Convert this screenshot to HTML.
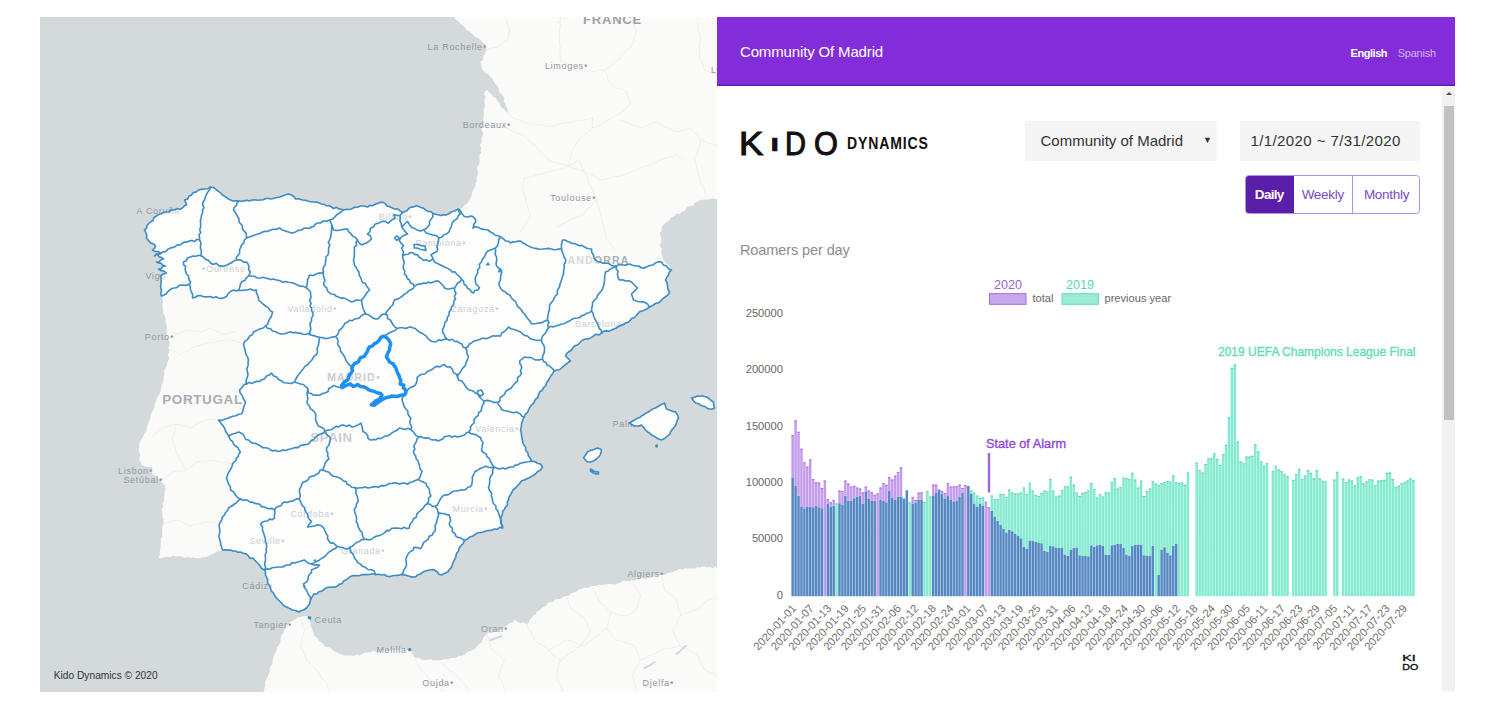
<!DOCTYPE html>
<html lang="en"><head><meta charset="utf-8"><title>Kido Dynamics - Community Of Madrid</title>
<style>
html,body{margin:0;padding:0;background:#fff}
body{width:1500px;height:717px;position:relative;overflow:hidden;font-family:"Liberation Sans",sans-serif;color:#333}
#map{position:absolute;left:39.5px;top:17px;width:677.5px;height:674.7px;overflow:hidden;background:#d4d9dc}
#map svg{display:block;font-family:"Liberation Sans",sans-serif}
#panel{position:absolute;left:717px;top:17px;width:738px;height:674px;background:#fff;overflow:hidden}
#hdr{position:absolute;left:0;top:0;width:738px;height:69px;background:#822dd9;color:#fff;box-shadow:inset 0 -1.5px 0 rgba(50,0,120,.4)}
#hdr .ttl{position:absolute;left:23px;top:25px;font-size:15px;line-height:20px;letter-spacing:-0.15px;white-space:nowrap}
#hdr .lang{position:absolute;right:19px;top:29px;font-size:11px;line-height:14px;white-space:nowrap;letter-spacing:-0.2px}
#hdr .lang b{font-weight:bold;margin-right:10.5px;letter-spacing:-0.45px}
#hdr .lang span{opacity:.62}
#logo{position:absolute;left:0;top:108px;width:300px;height:40px;color:#111}
#logo .k{position:absolute;left:0;top:0.5px;font-size:33px;line-height:36px;-webkit-text-stroke:1.1px #111}
#logo .k i{position:absolute;top:0;font-style:normal;display:block;transform-origin:0 50%}
#logo .d{position:absolute;left:129.5px;top:0;font-size:16.5px;font-weight:bold;line-height:36px;letter-spacing:1px;transform:scaleX(.85);transform-origin:0 50%;white-space:nowrap}
.box{position:absolute;top:104.2px;height:39.5px;background:#f5f5f5;font-size:15px;line-height:39.5px;color:#333;white-space:nowrap}
#sel{left:308px;width:192px}
#sel span.t{position:absolute;left:15.5px;top:-0.6px;letter-spacing:0px}
#sel span.a{position:absolute;left:178px;top:0;font-size:9px}
#date{left:523px;width:179.5px}
#date span.t{position:absolute;left:10.5px;top:-0.6px;letter-spacing:0.4px}
#btns{position:absolute;left:528px;top:158px;width:174.5px;height:39px;box-sizing:border-box;border:1px solid #b593e3;border-radius:3.5px;overflow:hidden;font-size:13.5px;line-height:37px;color:#7a4cc4;white-space:nowrap;letter-spacing:-0.3px}
#btns div{position:absolute;top:-1px;height:39px;text-align:center;line-height:39px}
#btns .on{left:-1px;width:48.5px;background:#5b1ea9;color:#fff;font-weight:bold;letter-spacing:-0.7px}
#btns .w{left:47.5px;width:59.5px;border-right:1px solid #b593e3;box-sizing:border-box}
#btns .m{left:107px;width:67px}
#rpd{position:absolute;left:23px;top:224px;font-size:14.5px;line-height:18px;color:#8d8d8d;white-space:nowrap;letter-spacing:-0.1px}
#chartsvg{position:absolute;left:0;top:0}
#sb{position:absolute;left:725px;top:69px;width:13px;height:605px;background:#f1f1f1}
#sb .th{position:absolute;left:1.5px;top:19.5px;width:10px;height:314px;background:#c1c1c1}
#sb .up{position:absolute;left:3.5px;top:5.5px;width:0;height:0;border-left:3px solid transparent;border-right:3px solid transparent;border-bottom:3.5px solid #505050}
</style></head><body>
<div id="map">
<svg id="mapsvg" width="678" height="675" viewBox="39.5 17 678 675">
<rect x="39" y="17" width="680" height="676" fill="#d4d9dc"/>
<path d="M454 17 L455.3 19.9 L458.2 21.5 L460 24 L462.4 25.6 L464.5 27.5 L466 30 L468.7 31.2 L470.7 33.3 L473 35 L475 37.1 L477.8 38.1 L480 40 L482 42.6 L485 44 L485.4 47 L486 50 L484.7 53.1 L483 56 L482.5 59.5 L480 62 L480.7 64.7 L481.3 67.3 L482 70 L485 73 L487.9 74.4 L490 77 L492 78.6 L492.8 81.1 L494.4 83.1 L496 85 L497.8 87 L498.1 89.7 L498.9 92.2 L501 94 L502.5 96.3 L504 98.6 L503.2 101.8 L505 104 L505.7 107.1 L506.8 110.1 L508 113 L505.4 111.1 L503 109 L501 107.4 L499.7 105.2 L499 102.7 L497 101 L495.5 98.2 L492.5 96.7 L491 94 L488.5 92.5 L487 90 L484.5 91 L483.5 94 L484.9 97 L484 100 L484 102.5 L484.3 105.1 L484.2 107.6 L483 110 L483.3 112.4 L483.2 114.9 L483.1 117.3 L482.5 119.6 L482 122 L482.7 124.8 L481.1 127.3 L481 130 L483 134 L481 138 L481.4 140.5 L481.1 142.8 L479.4 145.1 L480.7 147.6 L480 150 L480.6 152.6 L478.9 154.9 L479 157.5 L479.1 160.1 L479.1 162.6 L478 165 L476.5 167.4 L477.1 170.2 L477.5 172.9 L477 175.5 L476 178 L476.3 180.7 L475.1 183 L475.2 185.6 L474 188 L472.4 190.5 L471.3 193.1 L471 196 L469.5 198.7 L468.2 201.7 L466 204 L463.5 205.5 L462 208 L458 209 L454 211 L450.7 212 L448 214 L445.5 214.9 L442.8 214.9 L440.3 215.5 L437.7 214.7 L435.1 214.3 L432.5 213.6 L430.3 211.5 L427.1 211.4 L424.7 209.6 L422.8 208.1 L420.4 207.5 L418.1 206.6 L415.9 205.7 L412.5 206.9 L409 207.7 L407.2 210 L404.9 211.6 L402.2 212.6 L399.3 210.6 L397.1 208.9 L394.2 209 L391.8 208.1 L389.5 206.7 L386.7 206.1 L384.9 203.8 L382.7 202.3 L379.6 202.4 L376.8 203.5 L374 204.5 L371.8 205.7 L369.1 205.5 L367 207 L363.6 206 L360 206 L357.1 207.3 L353.8 207.4 L351 209 L348.4 209.5 L345.6 209.3 L343 210 L340.6 209.3 L338.2 208.9 L336 207.3 L333.1 208.6 L331 207 L328.7 205.6 L325.9 205.8 L323.6 204.3 L321 204 L318.6 202.9 L316.2 202.1 L313.6 202 L311 202 L308 201.3 L305.1 200.2 L302 200 L298.6 198.9 L295 199 L293.3 196.5 L290.8 194.9 L288 194 L284.9 194.8 L282 196 L279.3 197 L276.5 197.5 L273.7 198.2 L271 199 L268.2 198.5 L265.4 198.5 L262.7 199.7 L260 200 L257.3 200.3 L254.4 199.7 L251.7 200 L249 201 L246.2 200.3 L243.5 200.9 L240.8 201.3 L238 201 L235.3 200.9 L232.6 201 L230 200 L227.2 198.5 L224.6 196.7 L222 195 L220.2 193.1 L218.2 191.5 L216 190 L213.4 187.7 L210 187 L207.3 188.8 L204 189 L201 189.4 L198 190 L195.9 191.9 L192.8 192.6 L191 195 L188.4 196.3 L187 199.2 L184 200 L185.2 202.4 L186 205 L183.7 206 L182 208 L179.5 209.3 L176.5 208.5 L174 210 L171.1 209.8 L168.8 211.9 L166 212 L163.2 212.3 L160.9 213.7 L158.2 214.3 L156 216 L153.5 217.5 L152.5 220.5 L150 222 L148.1 223.7 L146.4 225.5 L146.1 228.4 L144 230 L145.3 232.5 L146.2 235.1 L146 238 L148 240.5 L150 243 L152.9 243.8 L155 246 L154 248.4 L152 250 L154.5 251.4 L157.5 251.5 L160 253 L156.6 253.7 L154 256 L157 254 L158.3 256.5 L160.9 257.4 L163 259 L160.6 259.7 L158.6 261.7 L156 262 L158.3 262.9 L160.7 263.4 L162.6 265.4 L165 266 L162.3 266.2 L160.7 268.9 L158 269 L160.5 270.6 L163.7 271 L166 273 L162.7 274 L160 276 L160.8 278.5 L160.6 281 L160.6 283.5 L160 286 L160.5 288.5 L161 291 L160.2 293.6 L161 296 L162.2 298.9 L162.4 301.9 L162 305 L162.2 308 L162.6 311 L163 314 L164.5 316.4 L165.1 319.2 L165 322 L166.1 324.6 L166.2 327.3 L166 330 L166.1 332.6 L166.2 335.2 L166.9 337.6 L168 340 L169.3 342.4 L169 344.9 L168 347.6 L169 350 L168.6 352.4 L167.2 354.6 L168.2 357.3 L168.3 359.8 L167 362 L166.6 364.4 L165.8 366.8 L164.2 369 L163.6 371.4 L164 374 L163.2 376.7 L163 379.6 L162.5 382.4 L161 385 L160.6 387.8 L160.2 390.7 L159.3 393.4 L158 396 L156.2 398.5 L155.4 401.3 L154.2 404 L154 407 L153 409.8 L151.1 412.2 L150 414.9 L150 418 L148.8 420.4 L147.8 422.9 L147 425.5 L146 428 L145.9 431 L143.7 433.2 L143 436 L141.6 438.6 L139.7 441 L139 444 L138.8 447.1 L138 450 L138.9 452.6 L139.5 455.2 L139 458 L138.7 460.6 L141 462.5 L141 465 L144 466.1 L147 467 L149.6 466.9 L152 468 L151 472 L152.6 474.4 L155 476 L157.7 477.8 L160 480 L161.6 482.8 L164 485 L165 488.5 L164 492 L164.2 494.5 L163.3 496.8 L163.7 499.4 L163.4 501.8 L162 504 L162.9 506.5 L161.4 509 L161.3 511.5 L162 514 L161.9 516.5 L163.1 518.9 L162.7 521.5 L163 524 L161.9 526.4 L161.8 528.9 L161.4 531.4 L162 534 L161.6 536.5 L160.3 538.9 L160.5 541.5 L160 544 L160.1 546.7 L159.8 549.4 L159 552 L159.3 555.1 L158 558 L161.1 558.3 L164 557 L166.6 556.5 L169.5 557.3 L172 556 L174.7 556.6 L177.3 556.6 L180 556 L182.4 557 L184.8 557.8 L187.6 556.8 L190 558 L192.5 557.3 L195 558.2 L197.5 558.2 L200 558 L202.6 557.2 L205.4 556.9 L208 556 L211 554.4 L214 553 L216.7 551.2 L220 551 L222 550 L224.7 549.9 L227.3 550.1 L230 550 L232.4 551 L235 551 L237.4 552.2 L240 552 L242.7 553.3 L245.7 553.9 L248 556 L249.4 558.2 L252.4 558 L254 560 L256.5 562.5 L259 565 L260.8 568.2 L264 570 L265 572.2 L264.9 574.8 L266 577 L267.2 579.9 L267 583 L268.8 585.3 L270 588 L270.8 590.9 L273 593 L274.2 595.7 L276 598 L278.5 600.5 L281 603 L283.1 605.5 L286 607 L289 608.4 L292 610 L295.2 610.5 L298 612 L300.4 610.7 L303 610 L306 608 L307.5 606 L309 604 L310 600 L312 596 L313.5 593.9 L316.4 594 L318 592 L321.3 591.1 L324 589 L326.1 587.6 L328.5 587.2 L331 587 L334.1 587.2 L337 586 L338.9 584.2 L341.7 583.5 L343 581 L345.3 580.1 L347.2 578.6 L349 577 L351.9 575.7 L355 575.5 L358.6 575.8 L362 574.5 L365.5 574.6 L369 574.5 L372 573.8 L375 574.5 L378 574.3 L381 575 L383.7 574.5 L386 576 L389.6 576.6 L393 575.5 L395.7 575.5 L398.4 575.1 L401 574.5 L404.5 575.1 L408 576 L411.4 576.9 L415 577 L417.1 574.9 L420 574 L422.3 572.2 L425 571 L429 570 L433 569.5 L437 572 L438.4 574.3 L441 575 L445 573 L447.4 571.7 L449 569.5 L451.1 567.1 L452 564 L453.3 560.9 L455 558 L455.6 555.5 L456.3 553 L458 551 L458.5 548.3 L460 546 L462.6 543.7 L464 540.5 L466.8 539.1 L469 537 L472 536.3 L474.5 534.5 L477.5 532.8 L481 532.5 L484 531.5 L487 530.5 L490.6 530.4 L494 529 L496.7 529.3 L499.2 527.3 L502 528 L501 524 L500 520 L500.8 516.9 L502 514 L502.1 511.3 L504 509.3 L505 507 L507 505.1 L506.7 502.2 L508 500 L508.3 497.4 L509.8 495.2 L511 493 L512.4 490 L515 488 L517.2 485.5 L519.5 483 L521.2 480.7 L524 480 L527 478.5 L530 477 L532.5 475.6 L535 474 L537.1 471.5 L540 470 L542 467 L540 464 L537.3 463.5 L535 462 L531 461 L529.8 458.3 L528 456 L527.2 452.6 L525 450 L525.2 447.3 L523.5 445.3 L522.5 443 L521.8 439.5 L521 436 L520.9 432.9 L520 430 L520.8 427.1 L521 424 L521.9 421 L523 418 L525 414 L527.1 412.4 L528 410 L529.3 407.4 L531 405 L533 403.4 L534 401 L535.4 399 L537.4 397.5 L538 395 L539.2 391.8 L542 390 L543 387.6 L545 386 L546.1 382.8 L548 380 L549.2 377.9 L550.4 375.8 L552 374 L553.3 371.3 L556 370 L558.8 369.8 L561 368 L563.3 365.8 L566 364 L567.8 362.2 L570 361 L567 358 L565 356 L566.1 353.7 L568 352 L571 350 L573 347 L574.9 345.5 L577.3 344.7 L579 343 L580.7 341.2 L582.7 339.8 L585 339 L588 338.9 L590.6 337.6 L593 336 L595.4 334.2 L598.7 334.9 L601 333 L603.2 331.3 L605.8 330.9 L608.6 331.2 L611 330 L613.4 328.9 L615.8 328 L618 326.5 L620.3 325.2 L622.9 324.6 L625 323 L627.6 322.3 L629.5 320.7 L631 318.5 L633.6 317.8 L635.4 316 L637 314 L639.5 311.4 L643 310.5 L646.2 309 L649 307 L652.1 305.5 L655 303.5 L658.5 302.6 L661 300 L663.4 297.8 L666 296 L667.9 294.3 L669 292 L667.4 289.2 L667 286 L666.6 282.8 L665 280 L666.3 277.4 L668 275 L668.8 272.1 L671 270 L669 266 L666.2 263.8 L664 261 L662.1 259.1 L661.8 256.4 L661 254 L660.7 251.5 L661.5 248.9 L659.5 246.6 L660 244 L660.7 241.3 L660.9 238.7 L660 236 L659.3 233.2 L661.1 230.7 L661 228 L662.2 225.6 L664.1 223.8 L666 222 L668.7 221.1 L669.7 218.3 L672 217 L674.1 215.5 L676 213.5 L679.1 213.9 L681 212 L683.8 211.3 L685.4 208.9 L687.2 206.7 L690 206 L692.7 205.7 L694 202.9 L696.4 202 L698.4 200.4 L701 200 L704 199.6 L707 199.4 L710 199 L712.5 198.2 L715 199 L717.5 199.3 L720 199 L720 10 L454 10.0Z" fill="#fafaf9"/>
<path d="M262 695 L261.6 692.4 L263.6 690.4 L264 688 L264.7 685.7 L264.6 683.1 L265 680.7 L265.9 678.4 L267.5 676.4 L268 674 L269.5 671.8 L269.2 669.1 L269.8 666.6 L271.9 664.6 L272 662 L272.3 659.4 L273 657 L273.5 654.5 L275.4 652.5 L276 650 L276.3 647.2 L278.6 645.3 L279.7 642.8 L280 640 L280.4 637.3 L281.3 634.7 L282.9 632.5 L284 630 L285.1 627.3 L287 625 L290 622 L292.7 620.8 L295 619 L297.3 617.4 L300 617 L304 616 L308 616 L309.2 618.4 L309 621 L310.2 623.4 L310 626 L311.7 628.2 L312 631 L313.4 633.3 L314 636 L316.9 638.1 L319 641 L322.1 642.9 L324 646 L326.8 647.1 L329.8 647.7 L332 650 L334.6 651.4 L337.2 653 L340 654 L343.3 655.6 L347 655.5 L350 655.3 L353 656 L355.8 654.5 L359.2 655.7 L362 654 L364.8 652.6 L368 652.6 L371 652 L373.4 650.8 L376 651.9 L378.6 651.8 L381 651 L383.4 649.7 L385.9 649.6 L388.6 651.3 L391 650 L394 650.3 L397 650.4 L400 649.5 L403 649 L406 649.8 L409 649 L411 653 L413 656 L415.7 658 L419 658 L421.7 659.9 L425 660 L427.7 659.7 L430.4 659.3 L433 660.5 L435.7 660.3 L438.3 660.4 L441 660 L443.4 659.2 L446.1 659.4 L448.6 658.8 L451 658 L453.6 658.1 L456.1 657.5 L458.4 655.8 L461 656 L463.9 654.7 L466.3 652.6 L469 651 L472.2 650.1 L474.8 648.4 L477 646 L478.6 644 L481.1 642.6 L482 640 L482.7 637.5 L484.5 635.9 L486 634 L488.1 632.5 L490.8 633.3 L493 632 L495.4 631.5 L497.6 630.6 L500 630 L502.8 629 L504.6 626.6 L507 625 L509.1 623 L512.2 622.4 L514 620 L517 621.5 L520 623 L523.2 622.5 L526 624 L528.3 622.5 L529.1 619.8 L531 618 L532.3 615.7 L535 614.5 L536 612 L538.7 610.8 L540.6 608.6 L543 607 L545.7 605.9 L547.2 603.1 L550 602 L552.7 601.8 L554.5 599.6 L557 599 L560 599 L562.4 597.1 L565 596 L568 595.7 L570.2 593.4 L573 592.5 L575.9 591.8 L578.1 589.7 L581 589 L583.2 587.4 L586.1 587.9 L588.7 587.4 L591 586 L593.5 586.1 L596 585.7 L598.4 584.4 L601 585 L603.5 584.4 L606 584.4 L608.4 583.7 L611 584 L613.7 584.4 L616.1 583.7 L618.7 583.3 L621 582 L623.3 580.6 L626 580.9 L628.7 581.5 L631 580 L633.8 580.6 L636.3 579.4 L639 579 L641.5 577.7 L644.4 578.9 L647 578 L650.6 577.7 L654 576.5 L657.3 575 L661 575 L664 575.1 L666.4 573.6 L669 572.5 L671.8 572.2 L674.3 570.9 L677 570 L679.4 568.8 L682.1 569.7 L684.4 568.2 L687 568.5 L689.5 568.3 L692.1 568.5 L694.7 568.4 L697 567 L699.5 567.4 L702 566.6 L704.5 566.5 L707 567.5 L709.6 567 L712.2 568.2 L714.8 566.8 L717.4 568.4 L720 568 L720 700 L262 700.0Z" fill="#fafaf9"/>
<path d="M486 50 L491.4 48.1 L497 47 L500.3 44.6 L503.4 41.9 L507 40 L508.3 35.1 L509 30 L507.3 25.1 L506 20.0 M560 17 L559.4 21.6 L559.8 26.2 L558.9 30.8 L559 35.4 L559 40 L559 44 L559.8 48 L559.3 52 L559.7 56 L560 60 L563.7 62.6 L567.8 64.5 L572 66 L576.7 66.9 L580.8 69.5 L585.5 70.5 L590 72 L594.7 71.2 L599.3 70.1 L604 70.0 M604 70 L607.6 67.6 L611.3 65.5 L614.1 62 L618 60 L620.4 56.4 L623.4 53.4 L626.6 50.6 L629.6 47.6 L632 44 L633.7 39.4 L635 34.8 L636 30 L633.4 24.7 L630 20.0 M604 70 L606.4 74.5 L607.6 79.5 L610 84 L613.8 86.5 L617.7 88.5 L622.3 89.4 L626 92 L627.2 96 L628.9 99.9 L630 104 L626.6 107.3 L623.1 110.5 L620 114 L615.7 115.5 L612 117.9 L607.9 119.9 L604 122 L600.3 124.6 L596.2 126.4 L592 128.0 M504 110 L508.3 113.7 L512 118 L516.5 119.4 L521.1 120.8 L525.4 122.7 L530 124 L534 124 L538 125.2 L542 125 L545.9 126.1 L550 126 L554.5 125.7 L558.7 124.1 L563.1 123.2 L567.6 122.7 L572 122 L576 121.2 L580 120.3 L584.1 120 L588.1 119.2 L592 118 L591.8 123 L592 128.0 M592 128 L588.2 131.6 L584.1 134.7 L580 138 L576.9 141.7 L574.6 145.9 L572 150 L570.8 153.9 L570.4 158.1 L568.8 162 L568 166.0 M505 128 L508.8 129.4 L512.5 131 L516.1 132.9 L520 134 L523.5 136 L526.4 138.8 L529.2 141.7 L532.5 144.1 L536 146 L538.6 149.8 L541.8 153.2 L545.5 156.1 L548 160 L551.8 161.8 L556 162.5 L560 163.8 L564.1 164.4 L568 166 L571.9 167.7 L576 169 L580.2 169.9 L584 172 L588 174 L592.3 175.5 L596.2 177.7 L600 180 L604 179.1 L608 178.5 L611.9 177 L616 176.7 L620 176 L624.1 174.7 L628.2 173.3 L632 171.1 L636 169.7 L640 168 L643.9 166.2 L648.2 165.2 L652.2 163.6 L656.2 162 L660 160 L664.1 158.7 L668.2 157.5 L672.2 156.1 L676 154 L679.2 157.3 L683 160.0 M568 166 L564 167.2 L560.2 169 L556.1 169.9 L552 170.8 L548 172 L544.1 173.2 L540.1 174.5 L536 174.9 L532.1 176.6 L528.1 177.3 L524 178 L522.9 181.9 L522.7 186 L522 190 L523.6 194.6 L525.1 199.2 L526 204 L527.4 208 L528.7 212 L530 216 L527 219.7 L525.5 224.3 L522.1 227.7 L520 232.0 M568 166 L573.2 163.4 L578 160 L580.2 163.9 L582 168 L584 172 L586.6 176.4 L587.8 181.4 L590 186 L592 190.7 L594.1 195.3 L596 200 L597.2 204.7 L599.1 209.2 L600 214 L601.5 218.6 L602.2 223.5 L604 228 L604.4 232.1 L605.8 235.9 L606 240 L609.1 243 L611.8 246.3 L614 250.0 M556 228 L560.6 224.4 L566 222 L570.4 219.4 L575.2 217.7 L580 216 L583.7 213.3 L586.1 209.3 L589.9 206.7 L592.4 202.8 L596 200.0 M620 120 L624.1 121.5 L628 123.1 L631.9 125.1 L636.1 126.1 L640 128 L644.1 126.7 L648 125 L652 123.4 L656 122 L659.8 124.4 L663.8 126.4 L668.1 127.9 L671.9 130.3 L676 132 L680.7 130.8 L685.4 129.6 L690 128 L693.6 131.7 L697.1 135.6 L700 140 L704.4 141 L708.3 143.4 L712.8 144.2 L717 146.0 M696 20 L697.3 23.9 L697.6 28 L698 32.1 L699.4 36 L700 40 L698.9 43.9 L699 48 L699.2 52.1 L698 56 L700.5 60.4 L702.4 65.2 L704 70 L708.2 71.8 L712.7 72.6 L717 74.0 M700 140 L699.4 144.2 L698.3 148.2 L697 152.2 L694.6 155.8 L694 160 L695.3 164 L696.2 168.1 L697.1 172.2 L698.4 176.1 L700 180 L700.8 184.2 L703.5 187.8 L703.9 192.2 L706 196.0 M169 350 L174.7 351.4 L180 354 L184.1 352.2 L188.1 350.2 L191.7 347.5 L196 346 L200 345.2 L204 344 L207.9 342.4 L212 342 L216.5 341.3 L221 341 L225.4 339.9 L230 340 L234.5 340.9 L238.7 342.4 L243 344.0 M166 330 L171 332 L176 334 L181.1 332.1 L186 330 L190.6 331.3 L195.4 330.7 L200 332 L204.9 329.9 L210 328 L213.8 330.4 L218.2 331.6 L222 334 L226.8 334 L231.3 332.2 L236 332.0 M152 436 L155.7 433.8 L158.4 430.3 L162 428 L166.7 426.7 L171.3 425.2 L176 424 L180.7 425.1 L185.4 426.5 L190 428 L193.6 426.2 L196.9 423.9 L200.6 422.1 L204 420 L208.7 419.6 L213.3 419.6 L218 420.0 M160 480 L164 477.4 L168.4 475.2 L172 472 L176.6 470.8 L181.4 471.2 L186 470 L189.2 467.1 L192.9 464.9 L196 462 L200.6 461.1 L205.4 461.3 L210 460 L214.4 460.6 L218.8 461.8 L223.1 463 L227.7 462.7 L232 464.0 M163 524 L167.2 522.2 L171.6 521.1 L176 520 L180.9 521.5 L185.3 524 L190 526 L193.8 524.4 L198 524.1 L201.9 522.8 L206 522 L210.7 522.1 L215.3 522.2 L220 522.0 M176 424 L174.4 427.8 L174.4 432.1 L172.8 436 L172 440 L173.9 443.9 L174.9 448 L175.9 452.2 L178 456 L179.6 459.7 L181.7 463.2 L183.7 466.7 L186 470.0 M300 617 L300.7 621.5 L302.8 625.6 L304 630 L302.7 633.9 L301.8 637.9 L301.6 642.1 L300 646 L302.1 650.6 L304.5 655.1 L306 660 L309.2 662.8 L312.1 665.9 L315.3 668.7 L318 672 L320 676 L322.5 679.8 L325.8 683 L327.3 687.4 L330 691.0 M409 649 L411.7 653 L413.8 657.3 L416.1 661.6 L418 666 L420.8 669.7 L423.8 673.2 L427.1 676.4 L430 680 L433.1 683.3 L437.1 685.4 L440.6 688.2 L444 691.0 M440 662 L443.6 665.8 L447.6 669.2 L452 672 L455.6 675.1 L458.7 678.6 L462 682 L464.8 684.9 L467.2 688.1 L470 691.0 M486 634 L487.9 637.9 L488.9 642 L490.2 646.1 L492 650 L496 653.3 L499.9 656.7 L504 660 L502.2 663.9 L501.1 668 L499.6 672 L498 676 L500 679.7 L502.3 683.3 L503.5 687.5 L506 691.0 M526 624 L527.7 628.2 L530.5 631.7 L531.9 636.1 L534 640 L537.4 642.6 L541.3 644.6 L544.8 647 L548 650 L551.8 653.6 L555.6 657.2 L560 660 L558.5 663.9 L557.8 668 L556.7 671.9 L556 676 L557 679.9 L558.8 683.6 L561 687 L562 691.0 M565 596 L567.6 600.5 L569.1 605.6 L572 610 L576.1 612.6 L579.9 615.4 L584 618 L585.9 622.7 L587.7 627.5 L590 632 L587.5 635.5 L584.9 638.9 L582.5 642.5 L580 646 L576.3 647.8 L573.7 651.1 L569.6 652.5 L566.5 655.1 L563.7 658.2 L560 660.0 M591 586 L593.8 590.4 L595.8 595.3 L598 600 L600.6 603.4 L604.3 605.7 L607 609 L610 612 L614.5 613.9 L619.2 615.2 L624 616 L628.3 614.6 L632.1 612.2 L636 610 L637.3 605.3 L638.7 600.7 L640 596 L637.7 592 L635.3 588.1 L633.6 583.8 L631 580.0 M610 612 L609.1 616 L608.6 620.1 L607.3 624.1 L606 628 L608.9 632.4 L612.2 636.4 L616 640 L620.6 641.2 L625.1 642.8 L629.7 643.9 L634 646 L636.1 650.6 L638 655.3 L640 660 L637.5 663.7 L635.6 667.8 L633.6 671.8 L632 676 L633.9 680.8 L634.6 686 L636 691.0 M661 575 L661.8 580 L663.3 584.9 L664 590 L668.1 593.2 L672.4 596.2 L676 600 L677 604 L677.4 608.2 L679.5 611.9 L680 616 L677.9 619.4 L676.4 623.2 L674.4 626.7 L672 630 L674.1 634 L675.7 638.1 L677.9 642.1 L680 646 L683.9 648.2 L688.2 649.7 L691.9 652.3 L696 654 L698.6 657.7 L699.5 662.3 L702 666 L704 670 L708.5 671.7 L712.7 673.9 L717 676.0 M680 616 L683.8 613.9 L687.9 612.8 L691.8 610.9 L696 610 L700.3 607 L703.7 602.9 L708 600 L712.4 598.6 L717 598.0 M548 650 L551.7 648.2 L555.3 646.1 L559 644.3 L562.4 642 L566 640 L570.7 641 L575 642.9 L579.6 644.2 L584 646 L586.9 643.1 L590.1 640.6 L593.2 638.1 L596.6 635.7 L599.8 633.2 L602.6 630.2 L606 628.0 M640 660 L644.3 658.6 L647.9 655.8 L652.2 654.3 L656.3 652.6 L660 650 L663.9 648.6 L668.1 649 L672 647.6 L676 646.8 L680 646.0" fill="none" stroke="#f3eae8" stroke-width="0.9"/>
<path d="M490 640l6 -2 5 -2M644 668l6 -3 4 -3M676 654l5 -4 4 -4" stroke="#d4d9dc" stroke-width="2" fill="none" stroke-linecap="round"/>
<text x="612" y="19.5" text-anchor="middle" font-size="13" font-weight="bold" letter-spacing="0.8" fill="#9aa2a8" dominant-baseline="central">FRANCE</text>
<text x="486.5" y="46.5" text-anchor="end" font-size="9" font-weight="normal" letter-spacing="0.7" fill="#8f98a0" dominant-baseline="central">La Rochelle<tspan dx="0.5" font-size="8.5" font-weight="bold">•</tspan></text>
<text x="710.5" y="70" text-anchor="start" font-size="9" font-weight="normal" letter-spacing="0.7" fill="#8f98a0" dominant-baseline="central">Lyon</text>
<text x="587.5" y="66" text-anchor="end" font-size="9" font-weight="normal" letter-spacing="0.7" fill="#8f98a0" dominant-baseline="central">Limoges<tspan dx="0.5" font-size="8.5" font-weight="bold">•</tspan></text>
<text x="510.5" y="125" text-anchor="end" font-size="9" font-weight="normal" letter-spacing="0.7" fill="#8f98a0" dominant-baseline="central">Bordeaux<tspan dx="0.5" font-size="8.5" font-weight="bold">•</tspan></text>
<text x="595.5" y="197.5" text-anchor="end" font-size="9" font-weight="normal" letter-spacing="0.7" fill="#8f98a0" dominant-baseline="central">Toulouse<tspan dx="0.5" font-size="8.5" font-weight="bold">•</tspan></text>
<text x="136" y="211" text-anchor="start" font-size="9" font-weight="normal" letter-spacing="0.7" fill="#8f98a0" dominant-baseline="central">A Coruña</text>
<text x="411.7" y="217" text-anchor="end" font-size="9" font-weight="normal" letter-spacing="0.7" fill="#8f98a0" dominant-baseline="central">Bilbao<tspan dx="0.5" font-size="8.5" font-weight="bold">•</tspan></text>
<text x="465.5" y="243" text-anchor="end" font-size="9" font-weight="normal" letter-spacing="0.7" fill="#8f98a0" dominant-baseline="central">Pamplona<tspan dx="0.5" font-size="8.5" font-weight="bold">•</tspan></text>
<text x="598" y="259.5" text-anchor="middle" font-size="10.5" font-weight="bold" letter-spacing="1.2" fill="#a9b0b6" dominant-baseline="central">ANDORRA</text>
<text x="201.5" y="268.8" text-anchor="start" font-size="9" font-weight="normal" letter-spacing="0.7" fill="#8f98a0" dominant-baseline="central"><tspan font-size="8.5" font-weight="bold">•</tspan><tspan dx="0.5">Ourense</tspan></text>
<text x="145" y="275.5" text-anchor="start" font-size="9" font-weight="normal" letter-spacing="0.7" fill="#8f98a0" dominant-baseline="central">Vigo</text>
<text x="336.5" y="309" text-anchor="end" font-size="9" font-weight="normal" letter-spacing="0.7" fill="#8f98a0" dominant-baseline="central">Valladolid<tspan dx="0.5" font-size="8.5" font-weight="bold">•</tspan></text>
<text x="498.5" y="309" text-anchor="end" font-size="9" font-weight="normal" letter-spacing="0.7" fill="#8f98a0" dominant-baseline="central">Zaragoza<tspan dx="0.5" font-size="8.5" font-weight="bold">•</tspan></text>
<text x="625.5" y="324" text-anchor="end" font-size="9" font-weight="normal" letter-spacing="0.7" fill="#8f98a0" dominant-baseline="central">Barcelona<tspan dx="0.5" font-size="8.5" font-weight="bold">•</tspan></text>
<text x="173.5" y="337" text-anchor="end" font-size="9" font-weight="normal" letter-spacing="0.7" fill="#8f98a0" dominant-baseline="central">Porto<tspan dx="0.5" font-size="8.5" font-weight="bold">•</tspan></text>
<text x="353.5" y="377" text-anchor="middle" font-size="10.5" font-weight="bold" letter-spacing="1.1" fill="#8f98a0" dominant-baseline="central">MADRID<tspan dx="0.5" font-size="10.0" font-weight="bold">•</tspan></text>
<text x="202" y="399.5" text-anchor="middle" font-size="13.5" font-weight="bold" letter-spacing="0.6" fill="#a8aeb4" dominant-baseline="central">PORTUGAL</text>
<text x="331" y="437" text-anchor="middle" font-size="13.2" font-weight="bold" letter-spacing="0.6" fill="#8f98a0" dominant-baseline="central">SPAIN</text>
<text x="518.5" y="429" text-anchor="end" font-size="9" font-weight="normal" letter-spacing="0.7" fill="#8f98a0" dominant-baseline="central">Valencia<tspan dx="0.5" font-size="8.5" font-weight="bold">•</tspan></text>
<text x="612" y="424" text-anchor="start" font-size="9" font-weight="normal" letter-spacing="0.7" fill="#8f98a0" dominant-baseline="central">Palma</text>
<text x="152.5" y="471" text-anchor="end" font-size="9" font-weight="normal" letter-spacing="0.7" fill="#8f98a0" dominant-baseline="central">Lisbon<tspan dx="0.5" font-size="8.5" font-weight="bold">•</tspan></text>
<text x="162.5" y="479.8" text-anchor="end" font-size="9" font-weight="normal" letter-spacing="0.7" fill="#8f98a0" dominant-baseline="central">Setúbal<tspan dx="0.5" font-size="8.5" font-weight="bold">•</tspan></text>
<text x="487.5" y="508.5" text-anchor="end" font-size="9" font-weight="normal" letter-spacing="0.7" fill="#8f98a0" dominant-baseline="central">Murcia<tspan dx="0.5" font-size="8.5" font-weight="bold">•</tspan></text>
<text x="333.5" y="514" text-anchor="end" font-size="9" font-weight="normal" letter-spacing="0.7" fill="#8f98a0" dominant-baseline="central">Córdoba<tspan dx="0.5" font-size="8.5" font-weight="bold">•</tspan></text>
<text x="284.5" y="541" text-anchor="end" font-size="9" font-weight="normal" letter-spacing="0.7" fill="#8f98a0" dominant-baseline="central">Seville<tspan dx="0.5" font-size="8.5" font-weight="bold">•</tspan></text>
<text x="384.5" y="551" text-anchor="end" font-size="9" font-weight="normal" letter-spacing="0.7" fill="#8f98a0" dominant-baseline="central">Granada<tspan dx="0.5" font-size="8.5" font-weight="bold">•</tspan></text>
<text x="272.5" y="586" text-anchor="end" font-size="9" font-weight="normal" letter-spacing="0.7" fill="#8f98a0" dominant-baseline="central">Cádiz<tspan dx="0.5" font-size="8.5" font-weight="bold">•</tspan></text>
<text x="314" y="619.5" text-anchor="start" font-size="9" font-weight="normal" letter-spacing="0.7" fill="#8f98a0" dominant-baseline="central">Ceuta</text>
<text x="291.5" y="624.5" text-anchor="end" font-size="9" font-weight="normal" letter-spacing="0.7" fill="#8f98a0" dominant-baseline="central">Tangier<tspan dx="0.5" font-size="8.5" font-weight="bold">•</tspan></text>
<text x="663.5" y="573.5" text-anchor="end" font-size="9" font-weight="normal" letter-spacing="0.7" fill="#8f98a0" dominant-baseline="central">Algiers<tspan dx="0.5" font-size="8.5" font-weight="bold">•</tspan></text>
<text x="507.5" y="629" text-anchor="end" font-size="9" font-weight="normal" letter-spacing="0.7" fill="#8f98a0" dominant-baseline="central">Oran<tspan dx="0.5" font-size="8.5" font-weight="bold">•</tspan></text>
<text x="410.5" y="650" text-anchor="end" font-size="9" font-weight="normal" letter-spacing="0.7" fill="#8f98a0" dominant-baseline="central">Melilla<tspan dx="0.5" font-size="8.5" font-weight="bold">•</tspan></text>
<text x="453.5" y="682.5" text-anchor="end" font-size="9" font-weight="normal" letter-spacing="0.7" fill="#8f98a0" dominant-baseline="central">Oujda<tspan dx="0.5" font-size="8.5" font-weight="bold">•</tspan></text>
<text x="673.5" y="682.5" text-anchor="end" font-size="9" font-weight="normal" letter-spacing="0.7" fill="#8f98a0" dominant-baseline="central">Djelfa<tspan dx="0.5" font-size="8.5" font-weight="bold">•</tspan></text>
<path d="M458 209 L454 211 L450.7 212 L448 214 L445.5 214.9 L442.8 214.9 L440.3 215.5 L437.7 214.7 L435.1 214.3 L432.5 213.6 L430.3 211.5 L427.1 211.4 L424.7 209.6 L422.8 208.1 L420.4 207.5 L418.1 206.6 L415.9 205.7 L412.5 206.9 L409 207.7 L407.2 210 L404.9 211.6 L402.2 212.6 L399.3 210.6 L397.1 208.9 L394.2 209 L391.8 208.1 L389.5 206.7 L386.7 206.1 L384.9 203.8 L382.7 202.3 L379.6 202.4 L376.8 203.5 L374 204.5 L371.8 205.7 L369.1 205.5 L367 207 L363.6 206 L360 206 L357.1 207.3 L353.8 207.4 L351 209 L348.4 209.5 L345.6 209.3 L343 210 L340.6 209.3 L338.2 208.9 L336 207.3 L333.1 208.6 L331 207 L328.7 205.6 L325.9 205.8 L323.6 204.3 L321 204 L318.6 202.9 L316.2 202.1 L313.6 202 L311 202 L308 201.3 L305.1 200.2 L302 200 L298.6 198.9 L295 199 L293.3 196.5 L290.8 194.9 L288 194 L284.9 194.8 L282 196 L279.3 197 L276.5 197.5 L273.7 198.2 L271 199 L268.2 198.5 L265.4 198.5 L262.7 199.7 L260 200 L257.3 200.3 L254.4 199.7 L251.7 200 L249 201 L246.2 200.3 L243.5 200.9 L240.8 201.3 L238 201 L235.3 200.9 L232.6 201 L230 200 L227.2 198.5 L224.6 196.7 L222 195 L220.2 193.1 L218.2 191.5 L216 190 L213.4 187.7 L210 187 L207.3 188.8 L204 189 L201 189.4 L198 190 L195.9 191.9 L192.8 192.6 L191 195 L188.4 196.3 L187 199.2 L184 200 L185.2 202.4 L186 205 L183.7 206 L182 208 L179.5 209.3 L176.5 208.5 L174 210 L171.1 209.8 L168.8 211.9 L166 212 L163.2 212.3 L160.9 213.7 L158.2 214.3 L156 216 L153.5 217.5 L152.5 220.5 L150 222 L148.1 223.7 L146.4 225.5 L146.1 228.4 L144 230 L145.3 232.5 L146.2 235.1 L146 238 L148 240.5 L150 243 L152.9 243.8 L155 246 L154 248.4 L152 250 L154.5 251.4 L157.5 251.5 L160 253 L156.6 253.7 L154 256 L157 254 L158.3 256.5 L160.9 257.4 L163 259 L160.6 259.7 L158.6 261.7 L156 262 L158.3 262.9 L160.7 263.4 L162.6 265.4 L165 266 L162.3 266.2 L160.7 268.9 L158 269 L160.5 270.6 L163.7 271 L166 273 L162.7 274 L160 276 L160.8 278.5 L160.6 281 L160.6 283.5 L160 286 L160.5 288.5 L161 291 L160.2 293.6 L161 296 L163.3 295.1 L165.5 294.1 L167 292 L169 290.1 L171.2 288.5 L174 288 L176.8 287.3 L179 285.2 L182 285 L185.6 285.4 L189 284 L189.8 287 L190 290 L191.3 292.5 L192.2 295.1 L192 298 L194.7 297.2 L197.1 295.7 L200 295.5 L202.4 296.5 L204.9 296.9 L207.4 296.8 L210 296.5 L212.5 297.7 L215.5 296.7 L218 298 L221.1 298.4 L224 297.5 L226.5 296 L227.8 293.3 L230 291.5 L232.5 290.1 L235.3 290.8 L238 290.5 L241 290.4 L244 290 L247 290 L250 289 L253 290.5 L256 290 L255.8 292.6 L257 295 L257.9 297.4 L258 300 L260.3 302 L262.6 304.1 L265 306 L267.6 307.6 L269.4 310.3 L272 312 L271.4 314.5 L270.6 316.9 L269 319 L268 321.6 L267.2 324.2 L265 326 L262.3 328.2 L259 329 L256.1 330.6 L253 332 L252 334.6 L249.5 335.8 L248 338 L246.5 340.1 L244.1 341.6 L243 344 L243.6 346.7 L244.4 349.3 L245 352 L245.7 354.8 L247.2 357.2 L248 360 L247.5 362.4 L247.8 364.8 L246.9 367.2 L246.2 369.5 L247 372 L247.5 374.5 L246.9 376.8 L246 379.2 L245.6 381.5 L246 384 L243.4 384.6 L242 387 L239 390 L239.8 393.3 L242 396 L243 399.2 L245 402 L244 405 L243 408 L242.4 411.1 L241 414 L238.1 414.3 L235.5 415.7 L232.7 416.2 L230 417 L227.7 418.2 L225.3 418.7 L223 419.7 L220.7 420.4 L218 420 L219.4 422.1 L221 424 L222.7 425.9 L224 428 L225.1 431.2 L227 434 L228.6 437 L230 440 L232.2 441.6 L233.1 444.2 L235 446 L237.3 447.5 L238.5 449.9 L240 452 L238.3 453.7 L237.8 456.3 L236 458 L235.4 460.5 L233.6 462.1 L232 464 L231.5 466.5 L230.4 468.8 L229 471 L227.6 473.2 L226.9 475.6 L226 478 L227 481 L228 484 L229.9 486.7 L230 490 L233.1 491.9 L235 495 L237.1 497.6 L240 499 L237.9 500.6 L236.2 502.6 L234 504 L232.1 505.5 L230 506.7 L228 508 L227.1 510.6 L225 512.5 L224 515 L222 516.9 L221.4 519.7 L220 522 L218.5 524.8 L219 528 L219.3 531 L219 534 L218.4 536.8 L219.3 539.4 L220 542 L220.2 544.8 L221.2 547.4 L222 550 L224.7 549.9 L227.3 550.1 L230 550 L232.4 551 L235 551 L237.4 552.2 L240 552 L242.7 553.3 L245.7 553.9 L248 556 L249.4 558.2 L252.4 558 L254 560 L256.5 562.5 L259 565 L260.8 568.2 L264 570 L265 572.2 L264.9 574.8 L266 577 L267.2 579.9 L267 583 L268.8 585.3 L270 588 L270.8 590.9 L273 593 L274.2 595.7 L276 598 L278.5 600.5 L281 603 L283.1 605.5 L286 607 L289 608.4 L292 610 L295.2 610.5 L298 612 L300.4 610.7 L303 610 L306 608 L307.5 606 L309 604 L310 600 L312 596 L313.5 593.9 L316.4 594 L318 592 L321.3 591.1 L324 589 L326.1 587.6 L328.5 587.2 L331 587 L334.1 587.2 L337 586 L338.9 584.2 L341.7 583.5 L343 581 L345.3 580.1 L347.2 578.6 L349 577 L351.9 575.7 L355 575.5 L358.6 575.8 L362 574.5 L365.5 574.6 L369 574.5 L372 573.8 L375 574.5 L378 574.3 L381 575 L383.7 574.5 L386 576 L389.6 576.6 L393 575.5 L395.7 575.5 L398.4 575.1 L401 574.5 L404.5 575.1 L408 576 L411.4 576.9 L415 577 L417.1 574.9 L420 574 L422.3 572.2 L425 571 L429 570 L433 569.5 L437 572 L438.4 574.3 L441 575 L445 573 L447.4 571.7 L449 569.5 L451.1 567.1 L452 564 L453.3 560.9 L455 558 L455.6 555.5 L456.3 553 L458 551 L458.5 548.3 L460 546 L462.6 543.7 L464 540.5 L466.8 539.1 L469 537 L472 536.3 L474.5 534.5 L477.5 532.8 L481 532.5 L484 531.5 L487 530.5 L490.6 530.4 L494 529 L496.7 529.3 L499.2 527.3 L502 528 L501 524 L500 520 L500.8 516.9 L502 514 L502.1 511.3 L504 509.3 L505 507 L507 505.1 L506.7 502.2 L508 500 L508.3 497.4 L509.8 495.2 L511 493 L512.4 490 L515 488 L517.2 485.5 L519.5 483 L521.2 480.7 L524 480 L527 478.5 L530 477 L532.5 475.6 L535 474 L537.1 471.5 L540 470 L542 467 L540 464 L537.3 463.5 L535 462 L531 461 L529.8 458.3 L528 456 L527.2 452.6 L525 450 L525.2 447.3 L523.5 445.3 L522.5 443 L521.8 439.5 L521 436 L520.9 432.9 L520 430 L520.8 427.1 L521 424 L521.9 421 L523 418 L525 414 L527.1 412.4 L528 410 L529.3 407.4 L531 405 L533 403.4 L534 401 L535.4 399 L537.4 397.5 L538 395 L539.2 391.8 L542 390 L543 387.6 L545 386 L546.1 382.8 L548 380 L549.2 377.9 L550.4 375.8 L552 374 L553.3 371.3 L556 370 L558.8 369.8 L561 368 L563.3 365.8 L566 364 L567.8 362.2 L570 361 L567 358 L565 356 L566.1 353.7 L568 352 L571 350 L573 347 L574.9 345.5 L577.3 344.7 L579 343 L580.7 341.2 L582.7 339.8 L585 339 L588 338.9 L590.6 337.6 L593 336 L595.4 334.2 L598.7 334.9 L601 333 L603.2 331.3 L605.8 330.9 L608.6 331.2 L611 330 L613.4 328.9 L615.8 328 L618 326.5 L620.3 325.2 L622.9 324.6 L625 323 L627.6 322.3 L629.5 320.7 L631 318.5 L633.6 317.8 L635.4 316 L637 314 L639.5 311.4 L643 310.5 L646.2 309 L649 307 L652.1 305.5 L655 303.5 L658.5 302.6 L661 300 L663.4 297.8 L666 296 L667.9 294.3 L669 292 L667.4 289.2 L667 286 L666.6 282.8 L665 280 L666.3 277.4 L668 275 L668.8 272.1 L671 270 L668 268.7 L666 266 L662.8 264.9 L661 262 L657.9 261.7 L655 263 L653 264.7 L650.5 265.3 L648 266 L645.8 267.1 L643.6 268.1 L641 268 L638.3 266 L635 266 L631.9 265.2 L629 264 L625.6 265.1 L622 265 L618.8 264.4 L616 266 L612.9 266 L610 265 L607.8 263.2 L605 263 L602.3 263.3 L600 262 L597.3 261.6 L595 260 L593.3 257.8 L593 255 L591.2 252.3 L591 249 L588.6 248.7 L586.2 248.2 L584 247 L581.9 245.6 L579.4 245.6 L577 245 L574.5 243.6 L571.5 243.5 L569 242 L566.7 241.2 L564.5 240 L562 240 L561 244 L560.9 246.5 L561 249 L558.5 249.1 L556 249.5 L553.5 249.8 L551 249 L548 248.4 L545 248.7 L542 249 L538.9 249.2 L536 248.6 L533 248 L530.6 247.2 L528.3 246.1 L526 245 L524.1 243.6 L521.8 242.7 L520 241 L517.4 241.1 L515 242 L512.3 241.7 L510 243 L507.8 241.2 L505 241 L502.8 238.6 L500 237 L497.5 235.7 L494.6 235.3 L492.5 233.2 L490 232 L487.3 230 L484 229.5 L480.5 228.9 L477.4 227.2 L474.7 226.7 L472.5 228.2 L473.5 224 L475.2 222 L475 219.4 L473.2 217.2 L470.6 216 L467.3 217 L463.8 216.5 L461 213 L460 210.7 L458 209.0Z" fill="#ffffff" fill-opacity="0.52" stroke="#3d8cc4" stroke-width="1.6" stroke-linejoin="round"/>
<path d="M629 423 L631 421.8 L632.9 420.5 L635 419.5 L636.9 418.2 L639.2 417.6 L641 416 L643.4 414.7 L645.5 413.1 L648 412 L650.2 410.4 L652.4 408.8 L655 408 L657.5 406.5 L660 405 L662 404.1 L664 403 L665 406 L666 409 L670 410.5 L672.4 411.4 L675 412 L677 415 L678 418 L676.7 420.4 L676 423 L674.9 425.8 L673 428 L671.3 429.9 L670 432 L669 434.4 L667 436 L664 438.5 L661 440 L657 438.5 L655.1 437.1 L653 436 L650.8 434.8 L649 433 L646.9 431.7 L645 430 L643 427 L641 425 L638 426 L635 426 L632 425 L629 423.0Z" fill="#fafaf9"/>
<path d="M629 423 L631 421.8 L632.9 420.5 L635 419.5 L636.9 418.2 L639.2 417.6 L641 416 L643.4 414.7 L645.5 413.1 L648 412 L650.2 410.4 L652.4 408.8 L655 408 L657.5 406.5 L660 405 L662 404.1 L664 403 L665 406 L666 409 L670 410.5 L672.4 411.4 L675 412 L677 415 L678 418 L676.7 420.4 L676 423 L674.9 425.8 L673 428 L671.3 429.9 L670 432 L669 434.4 L667 436 L664 438.5 L661 440 L657 438.5 L655.1 437.1 L653 436 L650.8 434.8 L649 433 L646.9 431.7 L645 430 L643 427 L641 425 L638 426 L635 426 L632 425 L629 423.0Z" fill="#ffffff" fill-opacity="0.52" stroke="#3d8cc4" stroke-width="1.6" stroke-linejoin="round"/>
<path d="M691 398 L694.1 397.3 L697 396 L699.3 396.2 L701.6 395.8 L703.8 396.5 L706 397 L708.5 398.5 L710.5 400.5 L713 402 L713.1 405.1 L714 408 L711.6 409 L709 409 L706.6 408.2 L704.6 406.5 L702 406 L699.9 405.1 L698.2 403.6 L695.9 403.3 L694 402 L692.5 400 L691 398.0Z" fill="#fafaf9"/>
<path d="M691 398 L694.1 397.3 L697 396 L699.3 396.2 L701.6 395.8 L703.8 396.5 L706 397 L708.5 398.5 L710.5 400.5 L713 402 L713.1 405.1 L714 408 L711.6 409 L709 409 L706.6 408.2 L704.6 406.5 L702 406 L699.9 405.1 L698.2 403.6 L695.9 403.3 L694 402 L692.5 400 L691 398.0Z" fill="#ffffff" fill-opacity="0.52" stroke="#3d8cc4" stroke-width="1.6" stroke-linejoin="round"/>
<path d="M583 458 L585 455 L587 452 L589.3 450.6 L592 450 L594.5 448.9 L597 448 L600 449 L601 451 L600 454 L599 456 L596 459 L593 461 L590 462 L587 462 L585 460 L583 458.0Z" fill="#fafaf9"/>
<path d="M583 458 L585 455 L587 452 L589.3 450.6 L592 450 L594.5 448.9 L597 448 L600 449 L601 451 L600 454 L599 456 L596 459 L593 461 L590 462 L587 462 L585 460 L583 458.0Z" fill="#ffffff" fill-opacity="0.52" stroke="#3d8cc4" stroke-width="1.6" stroke-linejoin="round"/>
<path d="M590 469 L593 471 L595.4 471.9 L598 472 L598 474 L595.4 473.9 L593 473 L590 471 L590 469.0Z" fill="#fafaf9"/>
<path d="M590 469 L593 471 L595.4 471.9 L598 472 L598 474 L595.4 473.9 L593 473 L590 471 L590 469.0Z" fill="#ffffff" fill-opacity="0.52" stroke="#3d8cc4" stroke-width="1.6" stroke-linejoin="round"/>
<path d="M655.5 445.5 L656.5 445 L656.8 446.5 L655.8 447 L655.5 445.5Z" fill="#fafaf9"/>
<path d="M655.5 445.5 L656.5 445 L656.8 446.5 L655.8 447 L655.5 445.5Z" fill="#ffffff" fill-opacity="0.52" stroke="#3d8cc4" stroke-width="1.6" stroke-linejoin="round"/>
<path d="M210 187 L209.2 189.8 L207.3 192.1 L205.9 194.5 L204.8 197.2 L204 200 L202.5 202.3 L202.1 204.8 L203.5 207.7 L201.9 210 L202.2 212.6 L201.1 215 L200.7 217.5 L200 220 L200 222.5 L200.2 225 L200 227.5 L199.1 230 L200.3 232.5 L198.4 235 L199.1 237.5 L199 240.0 M199 240 L196.4 239.3 L194.1 241.6 L191.5 240.6 L188.9 240.7 L186.6 242.1 L184 242 L181.8 243.2 L179.7 245 L176.9 244.9 L174.8 246.4 L172.5 247.4 L170 248 L167.3 249.2 L165.3 251.6 L162.1 251.9 L160 254 L157 254.0 M199 240 L200.4 242.5 L200.1 245.3 L199.8 248 L200.9 250.6 L200.6 253.3 L201 256.0 M201 256 L198.2 255.3 L195.5 256.3 L192.7 256 L190 257 L187.1 257.8 L185.7 260.8 L183 262 L183 264.6 L185.2 266.6 L184.6 269.3 L185.2 271.6 L186 274 L188.2 276.3 L188.4 279.5 L190 282 L189 284.0 M201 256 L203.4 257.5 L205.4 259.6 L208.2 260.6 L210 263 L212.6 264.5 L215.8 263.2 L218.2 265.6 L221.1 266.1 L224 266 L226.5 265 L228.9 263.7 L231.3 262.6 L233.4 260.8 L236 260.0 M238 201 L236.5 203.1 L235.9 205.7 L233.6 207.4 L233 210 L234.7 212.1 L235.9 214.4 L237.1 216.7 L238.5 219 L238.5 221.9 L240.3 224 L242 226 L241.8 228.7 L243.4 230.9 L245.4 232.9 L245.9 235.4 L246 238.0 M246 238 L243.8 240 L243.4 242.9 L241.1 244.8 L240.2 247.5 L239 250 L239.2 252.8 L237.8 255.1 L235.9 257.3 L236 260.0 M236 260 L238.6 259.8 L241.1 260.4 L243.3 262.3 L246 262 L247.7 264.2 L248.5 266.8 L248.1 269.9 L250 272 L248 276 L245.9 277.9 L244.4 280.4 L241.5 281.5 L240 284 L239.2 287.3 L238 290.5 M249 276 L251.8 276 L254.6 276.6 L257.1 278.2 L260 278 L262.7 277.3 L265.1 278 L267.6 278.6 L270 279.5 L272.6 279 L275.1 279.7 L277.5 280.3 L280 281 L282.4 282.3 L285 281.5 L287.5 282.2 L290 282.5 L292.5 283 L294.8 283.9 L297 285 L299.9 286.3 L303.2 286.4 L306 288.0 M246 238 L248.7 237.1 L251.4 236.3 L254 235 L256.7 234.2 L259.5 233.5 L262 232 L264.7 231.3 L267.5 231.4 L270 230 L273 229.2 L276.1 229.3 L279 228 L281.8 229.9 L285 231 L288 232.1 L291 233 L293.6 232.6 L296 231.4 L298.3 230.2 L301 230 L303.2 228.3 L305.8 228 L308.7 228.5 L311 227 L313.4 226.3 L315.1 224 L317.3 223 L320 223 L322.7 221 L326.1 221.3 L329 220.0 M329 220 L332 219.2 L334.1 217.3 L336 215 L338.3 213.3 L340.8 211.8 L343 210.0 M329 220 L331 224.0 M331 224 L331.2 227 L331 230 L330.9 232.6 L330.3 235.1 L330.2 237.6 L329 240 L327.8 242.4 L329.3 245.1 L328.3 247.5 L328 250 L328.1 252.6 L327.4 255 L325.3 257 L325.4 259.6 L325 262 L324.8 264.6 L323.2 266.8 L322.4 269.3 L323 272.0 M323 272 L320.8 273.1 L318.3 273.1 L316 274 L312.6 275.5 L309 275 L308.4 277.4 L307 279.5 L307 282 L306.4 285 L306 288.0 M323 272 L322.8 274.8 L323.4 277.6 L324.5 280.3 L323 283.3 L324 286 L326.2 287.6 L326.8 290.6 L328.5 292.6 L331 294 L333.6 294.3 L335.6 296.2 L338 297 L340.3 298.1 L343 298 L345.8 299.1 L348.3 300.6 L351 302 L353.4 301.2 L355.8 300 L358.4 300.2 L361 300.0 M306 288 L308.2 289.8 L310 292 L310.1 294.8 L310.6 297.6 L309 300.4 L310.6 303.2 L309.5 306 L311.1 308.2 L311.2 310.8 L312.5 313 L312.5 315.7 L311 318.2 L311 321.3 L309.3 323.7 L310 326.5 L310.3 329.3 L309 332.2 L310 334.9 M310 335 L307.7 333.6 L304.9 334.5 L302.3 334.3 L300 333 L297.4 333.3 L295 332.2 L292.4 332.9 L290 331.7 L287.1 332.8 L284.1 333.8 L281 334 L277.9 333.3 L275.1 331.8 L272 331 L270.1 328.7 L266.9 328.3 L265 326.0 M331 224 L332 227 L333 230 L336.5 230.5 L340 230 L343.5 229.3 L347 229 L348.1 231.7 L350.3 233.7 L352 236 L355 237.4 L357 240.0 M357 240 L358.5 242.9 L361 245 L363.4 243.7 L366 243 L368.5 241.1 L371 239 L369.8 235.9 L367 234 L369.4 231.6 L370 228.2 L372.9 227 L374.7 224.1 L377.8 223.3 L381.7 221.4 L384.9 221.4 L387.6 223.3 L389.7 221.4 L391.8 219.5 L394.4 218.4 L393.4 214.5 L396.3 215.5 L399.3 215.5 L402.2 212.6 M399.3 215.5 L399.9 217.9 L399.3 220.4 L400.7 223.7 L401.3 227.2 M357 240 L355.5 242.3 L356.1 245.2 L353.8 247.2 L354 250 L353.8 252.5 L353.9 255 L353.7 257.5 L353 260 L353.5 262.7 L354 265.4 L355.8 267.6 L357 270 L358.5 272.3 L358.7 275.1 L360.1 277.4 L361 280 L362 282.6 L364.9 283.5 L366 286 L367.6 287.9 L369 290 L366.7 292.3 L365 295 L363.2 297.6 L361 300.0 M361 300 L361.4 303 L362 306 L362.7 308.8 L363.9 311.5 L365.4 314.0 M365.4 314 L362.9 314.4 L360.7 315.8 L358.9 317.9 L356.6 318.6 L354 319 L351.9 320.7 L349 320.3 L347 322.3 L344.5 323 L343 325.9 L341 328.5 L338.9 330.1 L338 332.5 L336.9 334.8 L335 336.5 M335 336.5 L331.7 337.1 L328.5 338 L325.3 338.7 L322.2 337.6 L319 337.3 M319 337.3 L316 336.6 L313 335.6 L310 335.0 M319 337.3 L318.7 339.9 L318.4 342.4 L318 345 L316.6 348.4 L317 352 L316.2 354.6 L313.7 356 L312.4 358.3 L311 360.5 L308.8 362.3 L307.2 364.7 L304.5 366.1 L303 368.6 L301 371 L299 373.5 L297 376 L295.4 379 L294 382.0 M294 382 L290.6 383.5 L287 383 L283.7 382.8 L281 381 L278.1 379.5 L276 377 L272.9 375.8 L271 373 L268.9 375.1 L266 376 L264.1 378.8 L261 380 L258.9 381.5 L256.4 381.4 L254 382 L251.5 383.4 L248.4 382.4 L246 384.0 M294 382 L297 383.1 L300 384 L302.8 384.5 L304.9 386.3 L307 388.0 M307 388 L307.7 390.5 L308 393 L310.6 393.5 L312.9 395.2 L315.7 395 L319.1 395.3 L321.9 393.5 L325 392.7 L327.6 391.5 L328.3 388.4 L330.9 387.2 L333 385.5 L335.7 386.5 L338.4 387.3 L341.3 387.0 M335 336.5 L336.7 338.5 L337.6 340.8 L337.1 343.7 L338.1 346 L339.7 348 L339.9 350.8 L341.4 353.1 L343.1 355.2 L344.5 357.4 L345.4 360.5 L347.3 363 L349.4 365.4 L352 367.0 M365.4 314 L368.1 314.8 L370.3 316.4 L372.5 318 L375 319 L377.9 318.6 L379.7 316.3 L381.8 314.4 L384.7 314.0 M384.7 314 L387 315.4 L387.1 318.6 L389.6 319.8 L391 322 L392.4 324.6 L394.2 326.8 L396.7 328.5 M396.7 328.5 L394.6 330.5 L392 331.4 L389.5 332.5 L386.6 334.3 L384 336.5 M384.7 314 L386.3 311.5 L388.3 309.4 L390 307 L392.3 305 L392.9 302.1 L394.3 299.6 L397.2 299.1 L399.6 297.6 L402 296 L403.9 294.2 L406.2 292.9 L408 291 L410.3 289.7 L412.7 288.5 L414 286.0 M414 286 L412.5 283.9 L409.8 282.7 L409 280 L406.8 278.5 L405.9 275.8 L404 274 L404.3 270.9 L402.6 268.1 L403 265 L403.7 261.9 L402.6 259 L402 256.0 M402 256 L403 252 L401 248 L403.2 245.8 L400.3 242.9 L398.8 240.4 L400.2 237.9 L402.2 236 L404.6 234.9 L407.1 234 L404.2 231.1 L402.9 229 L401.3 227.2 M401.3 227.2 L404 224 L407.1 221.4 L408.9 224.4 L411 227.2 L414.1 228.4 L416.9 230.2 L420.1 230.9 L423.2 229.7 M423.2 229.7 L425.8 228.6 L427.6 226.3 L429.2 224.3 L428.9 221.5 L430.5 219.4 L432.3 216.8 L432.5 213.6 M423.2 229.7 L425.7 233.1 L429.1 234.1 L432.5 235 L435.9 235.6 L438.4 238.0 M438.4 238 L441.3 237.3 L443.3 234.7 L446.2 234 L448.5 231.9 L449.5 228.9 L451 226.3 L451.7 222.9 L454 220.4 L456.6 218.7 L457.7 215.7 L459.8 213.6 L458.4 211.5 L458 209.0 M438.4 238 L437.8 240.9 L437.4 243.8 L436.3 246.3 L437.1 249.1 L436.4 251.6 L433.4 253 L430.5 254.6 L432.5 258.5 M432.5 258.5 L430.8 260.2 L428.6 261.4 L426.2 259.8 L423 260.4 L420.8 258.5 L418.4 257 L416.9 254.6 L414.4 254.6 L412.5 252.7 L410 252.5 L407.6 254.2 L404.5 254.5 L402 256.0 M413.5 244.5 L416.3 244.5 L419.1 244.9 L421.7 245.9 L424.5 246 L425.5 250.5 L422.8 249.7 L420 249.5 L417.2 248.1 L414 248 L413.5 244.5 M432.5 258.5 L434 262 L438 264 L441 265.5 L444 267 L447 268.4 L450 270 L451.5 272 L454.5 271.9 L456 274 L458.7 276.3 L461 279.0 M461 279 L459.7 281.7 L457 283 L455.6 285.6 L454 288.0 M454 288 L451.4 288.2 L449 289 L446.4 289 L444 288 L442.8 285.8 L441 284 L438 281 L435.4 281.1 L433 282 L430.5 282.9 L428 282 L425.7 283.4 L423 283 L420.6 284.1 L418 284 L414 286.0 M461 279 L462.9 281.1 L463.6 284.2 L466 286 L467.1 288.4 L469.5 289.5 L470.8 291.7 L473 293 L474.3 290.5 L477.2 289.9 L479 288 L477.6 286 L475.7 284.4 L475 282 L474.6 278.4 L476 275 L477.4 272.7 L477 270 L479.2 267.8 L478.8 264.2 L481 262 L481.9 259.1 L484 256.8 L485 254 L486.9 251.2 L490 250 L492.5 249 L495 248.0 M495 248 L497.3 245.4 L498 242 L498.4 239.3 L500 237.0 M495 248 L495.1 251 L494.6 254.1 L496 257 L496.3 260 L495.6 263 L496 266 L498.4 268.2 L501 270 L501.2 272.7 L500.3 275.3 L500 278 L499.8 280.7 L498.3 283.2 L499 286 L500.3 288.7 L502.3 290.7 L505 292 L506.9 294.1 L509.7 295.3 L511 298 L512.9 299.8 L515 301.5 L516 304 L517.1 306.4 L519.1 308.2 L521 310 L522.4 312.5 L524.5 314.5 L526 317 L527.8 319.3 L529.7 321.4 L531 324 L533.5 323.8 L536 323.5 L538.5 322.8 L541 323 L543.9 321.3 L547 320.0 M547 320 L547.2 316.5 L548 313 L549 309.6 L549 306 L549.8 303.7 L551.6 301.9 L553 300 L553.8 297.6 L555.2 295.7 L557 294 L556.7 291.4 L557.5 289.1 L559 287 L559.4 284.6 L560.2 282.3 L561 280 L561.8 277 L563 274.1 L563 271 L563.9 268.1 L563.5 264.8 L565 262 L565.3 259.4 L563.7 257.3 L563 255 L561.7 252.1 L561 249.0 M547 320 L548.4 322.5 L547.2 325.4 L548 328.0 M548 328 L550 326.3 L552.8 327 L555 326 L558.1 325.3 L561 324 L563.9 323.7 L566.4 322.1 L569 321 L571.4 319.3 L574 318.2 L577 318 L579.5 317.4 L581.4 315.4 L584 315 L586.1 313.2 L588.9 312.7 L591 311.0 M591 311 L591.3 308 L592 305 L592.2 302.2 L594 300 L596.3 298.1 L597.1 295.1 L599 293 L600.9 291 L602.2 288.6 L603 286 L603.8 282.5 L604 279 L604.4 275.5 L605 272 L607.8 271 L610 269 L613 267.5 L616 266.0 M591 311 L592.7 313.2 L593 316 L595 320 L596.7 322.9 L598 326 L598.6 328.5 L601 330.3 L601 333.0 M616 266 L615.6 268.8 L617.5 271.2 L617 274 L617.3 277.2 L619 280 L622.1 279.8 L625 281 L628.1 280.7 L631 282 L634 285 L637 288 L634 291 L631 294 L632 297 L633 300 L635.3 300.8 L637.6 301.5 L640 302 L642.6 301.6 L644.8 302.7 L647 304 L649 307.0 M548 328 L546.5 329.9 L545.6 332.2 L544 334 L541.8 336.6 L541 340.0 M541 340 L541.5 342.6 L543 344.8 L544 347.3 L544 350 L543.6 353.1 L542.2 355.9 L542 359.0 M542 359 L543 361.5 L545.4 362.6 L546.5 365 L549 366 L551.7 368.3 L554 371.0 M541 340 L538 340.5 L535 340 L532 339.4 L529.2 338.2 L527 336 L524.2 335.5 L522 333.9 L520 332 L517 330.8 L514 329.5 L510.7 329 L508 327 L506.2 329.4 L504 331.5 L501.2 333 L500 336 L497.5 335.8 L495 336.1 L492.4 335.8 L490 337 L487.6 337.9 L485.1 338.7 L482.5 338 L480.3 339.1 L478 340 L475.5 340.6 L473 341.3 L471 343 L468.6 344.2 L467.4 346.8 L465 348.0 M465 348 L462.4 347.1 L461.5 344 L458.9 343 L457 341.3 L454.2 341.5 L451.9 339.2 L448.9 340.3 L446.4 339.0 M454 288 L454.2 290.8 L455.5 293.4 L453.8 296.3 L455 299 L453.2 301.3 L453.2 304.4 L451.1 306.7 L450.5 309.5 L448.6 311.9 L448.6 315 L446.7 317.4 L446.5 320.5 L444.4 322.4 L444 325.1 L443 327.6 L442 330 L442.3 332.6 L443.9 334.7 L444.6 337.1 L446.4 339.0 M446.4 339 L443.5 339.4 L440.8 340.5 L438.3 339.7 L436 341.7 L433.5 341.8 L431 341.3 L428.9 339.9 L427.2 338.2 L425.7 336.1 L423.7 334.7 L421.6 333.3 L419 332.2 L416.8 330.5 L414.8 328.5 L412 327.7 L409.6 326.7 L407.1 327.9 L404.7 328.4 L402.3 327.7 L399.5 327.8 L396.7 328.5 M465 348 L466.5 350.5 L466.3 353.6 L468 356 L467.3 358.4 L466.7 360.8 L465.3 362.9 L465 365.4 L463 367.3 L461.3 369.5 L460 372 L457.8 374.3 L457 377.4 M457 377.4 L456.1 374.3 L452.9 372.6 L452 369.4 L449.9 366.9 L446.2 367 L444 364.6 L441.6 365.3 L439.4 366.8 L436.8 366.4 L434.4 367 L432.1 369.3 L429.3 370.6 L426.4 371.8 L424.4 374 L421.4 374.3 L418.8 375.5 L416.7 377.4 L416.5 380.7 L415.6 383.7 L413.5 386.3 L410.9 387 L408.7 388.2 L407 390.3 L404.5 394.0 M457 377.4 L458.3 380.2 L461.6 381.3 L463.4 383.7 L465 386.3 L466.8 388.7 L469.2 390.3 L472.3 390.8 L474.5 392.7 L477.4 394.2 L479 397 L481.1 399 L483.3 401.0 M394 238 L396.4 235.8 L398.8 238 L396.4 240.3 L394 238.0 M477 391 L481 390 L483 394 L480 396 L477 394 L477 391.0 M483.3 401 L486.6 400.4 L490 401 L493.4 402.4 L497 402.5 M497 402.5 L499.5 401 L499.6 397.6 L502 396 L504.2 394 L505.3 391.1 L508 389.5 L510.8 388 L512.6 385.4 L514.6 383 L517.1 381.2 L517 377.7 L519.4 375.8 L521 373.4 L519.9 370.9 L521.1 368.2 L520.8 365.6 L519.2 363.2 L519.4 360.6 L521.8 358.9 L524 357 L527 357.5 L530 357.4 L532.5 358.6 L535 360 L538.6 359.9 L542 359.0 M497 402.5 L498.1 405 L500 407 L501 409.4 L503.4 410.5 L506.7 411 L510 412 L513 412.7 L516 412 L520 414 L521.4 416.3 L524 417.0 M483.3 401 L483.3 403.6 L481.7 405.7 L481.1 408.3 L480.7 410.9 L478.2 412.7 L477.7 415.3 L475.4 417.3 L473.6 419.6 L473.6 423 L471.3 425 L469.9 427.2 L470 430.1 L468 432.0 M468 432 L465.8 433 L464.1 435 L461.7 435.7 L459.4 436.4 L457 437 L454.4 435.9 L451.6 437.3 L449.1 435.7 L446.4 436.2 L443.8 436.7 L442.2 439 L439.9 440 L437.6 441 L435.3 439.8 L432.6 440 L430.1 439.5 L428 437.8 L425.5 438.1 L423.1 437.9 L420.8 436.6 L418.3 437.0 M418.3 437 L415.8 435.7 L414 433.7 L412.4 431.4 L410.3 429.7 M410.3 429.7 L411.2 426.9 L409.6 424.1 L409.4 421.3 L410.3 418.5 L408.8 416.3 L407.5 414 L407.3 411.1 L405.5 409 L403.8 406.9 L403 404.4 L402.2 401.8 L401.5 399.3 L402.6 396.4 L404.5 394.0 M410.3 429.7 L407.6 428.3 L404.6 429.4 L401.8 428.8 L399 428 L396.9 430.1 L394.3 431.3 L391.7 432.6 L389.5 434.5 L387.2 435.8 L384.6 436.1 L382.3 437.4 L380 438.6 L377.4 438.2 L375.2 439.8 L372.6 439.4 L370.2 440.2 L367.6 438.5 L367 435 L364.9 432.9 L362.2 431.3 L362 428.6 L361.3 425.9 L360.6 423.3 L357.4 424.9 L354.2 426.5 L351.3 426.9 L348.7 425.1 L345.7 426.4 L343 425 L340.4 425.3 L338.3 426.9 L335.5 426.4 L333.3 428 L330.6 429.8 L327.4 430.1 L324.5 431.3 M307 388 L307.2 390.7 L306.3 393.3 L307 396 L307.4 398.7 L306.6 401.3 L306.8 404 L308.9 405.8 L309.8 408.6 L312 410.2 L314 412 L315.3 414.7 L315.1 417.7 L315.2 420.6 L316.5 423.3 L317.8 426 L320.5 427.3 L323.3 428.5 L324.5 431.3 M324.5 431.3 L322 433.3 L319 434.5 L316.8 435.8 L314.9 437.4 L313.3 439.6 L310.8 440.5 L309.3 442.6 L307.2 444.3 L304.6 444.6 L302.1 445.1 L299.6 445.8 L297.5 447.6 L294.8 447.4 L292.4 448.2 L290 449 L287.5 449.5 L285.1 450.5 L282.4 449.9 L280 451 L277.4 451.5 L275 450.3 L272.4 450.9 L270 450 L267.8 448.2 L265.1 447.7 L262.2 447.7 L260 446 L257.6 444.7 L255.2 443.4 L252.4 443.3 L250 442 L248.2 440 L245.3 439.5 L244 437 L242.7 434.5 L240.5 433.1 L238 432 L235.1 433.2 L232 434 L228 436.0 M324.5 431.3 L325.7 433.4 L327.3 435.3 L329.3 436.9 L330 439.4 L329.1 442.2 L328.4 445.2 L326.2 447.5 L326 450.6 L327.4 453.1 L327.1 456.1 L328.5 458.6 L326.2 460.8 L324.5 463.5 L323.7 466.6 L322 469.8 M322 469.8 L325.2 471.3 L328.5 472.3 L330.5 474.7 L333 476.2 L336 477 L338.7 477.7 L340.9 479.2 L343 481 L345.5 481.6 L346.6 484.3 L349 485 L351.1 487.2 L354.2 487.5 M354.2 487.5 L356.9 488.3 L359.5 487.8 L362.2 487.7 L364.9 486.9 L367.5 488 L370.2 487.5 L372.7 486.9 L375.3 486.6 L378 487.4 L380.4 485.6 L383 485.9 L385.9 485.3 L388.4 483.5 L391.5 483.4 L394.3 482.7 L396.8 483.2 L399.3 484.1 L402.1 483.1 L404.6 483.2 L407.1 484.3 L409.4 482.5 L412.2 481.8 L414.9 480.6 L417.5 479.5 M418.3 437 L416.4 439.1 L415.8 441.9 L414.3 444.2 L413.3 446.5 L414.4 449 L412.9 451.3 L413.5 453.8 L415.2 456 L415.6 458.7 L417.4 460.8 L418.3 463.4 L419.1 466.2 L419.7 469.1 L421.6 471.5 L420.4 474.3 L419.6 477.2 L417.5 479.5 M322 469.8 L319.4 470.4 L318.1 473.3 L315.8 474.3 L313.7 475.9 L311 476.3 L308.7 477.5 L307.4 479.9 L305.4 481.4 L302.6 482 L301.2 484.3 L300.5 486.9 L299 489.2 L299 492 L299.8 495.5 L298.8 499.0 M298.8 499 L296.3 498.8 L294 500 L291.7 501.3 L289.1 501.4 L286.7 502.4 L284 502 L281.7 503.3 L280.5 505.8 L277.7 506.4 L275.4 507.7 L274 510.0 M274 510 L271.6 508.4 L268.6 508.8 L266 508 L263.7 506.9 L261 506.8 L259.3 504.2 L256.8 503.8 L254.1 503.4 L252 502 L249.4 502.2 L247.3 500.4 L244.9 499.8 L242.3 500.2 L240 499.0 M274 510 L274.5 512.7 L273.9 515.3 L274 518 L271.9 519.6 L268.9 519.1 L267 521 L264.4 521.3 L262 522.1 L260 524 L261.9 526.7 L262 530 L263.1 533 L264 536 L264.8 538.6 L264.9 541.4 L266 544 L266.1 546.7 L265.7 549.3 L266 552 L264.7 554.5 L264.9 557.3 L265 560 L264.4 562.5 L264.2 565 L265.1 567.6 L264 570.0 M264 570 L266.6 568.9 L269.6 569.2 L272 567.5 L274.7 567.5 L277.3 567 L280 567 L282.5 567 L284.6 565.5 L287 565 L289.5 564.9 L291.4 562.9 L294 563 L296.5 562.3 L299 561.5 L301.5 560.7 L304 560 L306.1 561.8 L308.3 563.3 L311 564.0 M298.8 499 L299.9 501.3 L300.9 503.6 L302 505.8 L304.2 507.6 L304.4 510.3 L305.8 512.5 L307.3 514.6 L307.6 517.5 L309.1 519.6 L311 521.5 L308.7 524.1 L307 527 L310.5 526.5 L314 526 L317.2 524.7 L320.5 525.5 L323.1 527.8 L324.5 531 L325.6 533.5 L327.2 535.7 L327 538.7 L328.5 541 L330 543.1 L333 543 L334.7 544.7 L336.5 546.4 M336.5 546.4 L335 548.4 L332.6 549.3 L330.6 550.8 L328.5 552 L326.8 553.8 L325.2 555.7 L323.2 557.3 L320.9 558.4 L319 560 L316.4 561.5 L313.6 562.6 L311 564.0 M311 564 L313.6 565.1 L316.3 564.8 L319 565 L316.9 567.5 L313.9 568.6 L311 570 L310.9 572.6 L309 574.5 L307.7 576.7 L307.6 579.3 L305.8 582.2 L303 584 L303.8 587.4 L306 590 L307.1 592.5 L308 595 L309.9 597.2 L310 600.0 M336.5 546.4 L339.2 547.1 L342 547.4 L344.5 548.8 L347.2 548.9 L349.4 547.2 M349.4 547.2 L352.1 546 L354.2 544 L356.3 542.3 L358.9 541.5 L361 539.6 L363.8 539.2 M363.8 539.2 L362.6 537.1 L361.8 534.8 L361.6 532.3 L359.6 530.6 L358.6 528.4 L357.4 526.3 L357.2 523.8 L355.7 521.7 L356.1 519.1 L355.9 516.6 L354.9 514.3 L354.2 512 L353.8 509.2 L355.7 506.8 L355.9 504.1 L357.7 501.8 L357.4 499 L356.7 496.1 L355.3 493.4 L355.6 490.2 L354.2 487.5 M363.8 539.2 L366.2 539.4 L368.6 540 L371.5 539 L373.8 537.1 L376.6 536 L379.5 535.4 L382 534.1 L384.3 532.6 L386.3 530.4 L388.9 530.6 L391 528.5 L393.4 528.1 L396 528 L398.5 528.3 L401.1 528.7 L403.6 527.3 L406.2 528.6 L408.7 528 L409.3 525.6 L410.2 523.3 L412 521.5 L412.9 518.7 L415.8 517.2 L416.3 514.1 L418.3 512 L420.5 510.1 L422.6 508.3 L424.1 505.7 L426.4 504.0 M417.5 479.5 L420.3 480.9 L423.2 482.2 L425.6 483.4 L426.2 486.1 L428 487.8 L429.1 490.5 L429.2 493.4 L430.4 496 L428.1 498.2 L428 501.5 L426.4 504.0 M426.4 504 L429.3 504 L431.6 506.1 L434.4 506.5 L436.9 509.2 L437.6 512.7 M434.4 506.5 L436.8 505 L438.1 502.7 L439.2 500.2 L440.6 498 L442.4 496 L444.6 494.9 L447.3 494.9 L449.5 493.8 L451.4 491.9 L453.7 491 L456.1 491 L458.5 490.5 L460.8 489.8 L463.3 490 L465.7 489.3 L467.3 487.2 L469.8 486.7 L471.3 484.6 L471.6 482.2 L472 479.8 L471.7 477.3 L473 475 L474.5 471.5 L477.2 470.2 L479.7 468.5 L482.5 467.4 L485.3 466.3 L488.2 467.3 L491 467.6 L493.8 467.0 M468 432 L470.2 433.5 L472.8 434.1 L475.5 434.6 L477.7 436.2 L480.1 437.7 L480.9 440.4 L482.5 442.6 L481.8 445.2 L481.5 447.9 L481 450.6 L483 452.6 L485.6 454 L486.6 457 L489 458.6 L489.7 461 L491 463 L492.1 465.2 L493.8 467.0 M493.8 467 L496.5 468.3 L499.2 469.1 L502.3 467.9 L505 469 L507.4 467.7 L510 467 L512.7 467 L514.7 465.1 L517.3 465 L519.4 463.4 L522.3 462.6 L525.2 462.2 L528.1 461.8 L531 461.0 M493.8 467 L492.2 469.8 L492.3 473.2 L490.5 476 L489.3 478.2 L489.2 480.7 L489.1 483.1 L488.7 485.5 L488 487.8 L489.1 490.6 L491 493 L490.9 496.3 L492 499 L492.1 501.7 L493.3 504 L495.4 506 L495.4 508.7 L497.3 510.7 L498.2 513.3 L498.9 515.9 L500 518.3 L500.8 520.7 L500.1 523.3 L502 525.5 L502 528.0 M349.4 547.2 L349.9 549.6 L350.4 552.1 L352.3 553.9 L353.4 556.1 L354.2 558.4 L356 560.6 L357.7 562.9 L360.2 564.4 L362.2 566.4 L365 567.3 L367.4 569.5 L370.5 569.7 L373.4 570.5 L375 574.5 M437.6 512.7 L438.1 515.4 L437.1 517.9 L436.4 520.4 L436 523 L434.6 525.3 L434.9 528.1 L434.6 530.7 L432.8 532.8 L431.5 535.3 L428.6 536.3 L427.7 539.2 L425.5 540.9 L423.2 542.4 L421.9 545.7 L420 548.8 L416.8 547.6 L413.5 547.2 L412.8 550.1 L410 551.5 L408 553.4 L406.6 555.8 L405.5 558.4 L405.5 560.8 L405.9 563.3 L405.9 565.7 L404.7 568 L403.3 570.1 L402.7 572.6 L401 574.5 M437.6 512.7 L440.4 513.4 L443.3 513.5 L446 514.6 L448.8 515 L449.5 517.8 L450.2 520.6 L448.7 523.5 L449.6 526.3 L451.9 528.2 L451.8 531.5 L454.3 533.3 L455.3 536 L457.3 537.4 L459.9 537.8 L462 539.1 L464 540.5" fill="none" stroke="#3d8cc4" stroke-width="1.6" stroke-linejoin="round" stroke-linecap="round"/>
<path d="M485.5 265l2 -2.5 1.5 2.5zM497.5 272l1.5 -3 1.5 3zM303 585l2 1 -1 1.5zM313 560.5l2 -1 0.5 1.5z" fill="#3a8fc9" stroke="#3a8fc9" stroke-width="0.8"/>
<path d="M307.5 616.5l3 0.5 -0.5 2.5 -2.5 -1z M408.5 648.5l1.8 0 0 2.4 -1.8 0z" fill="#3a8fc9" stroke="#3a8fc9" stroke-width="0.8"/>
<path d="M384 336.3 L382 336.5 L380.2 337.6 L379.1 339.6 L377.7 341.3 L376.2 342.8 L374.1 343.5 L372.7 345.1 L371 346.4 L368.9 347 L367.6 349 L367 351.4 L365.3 353.8 L363.9 356.4 L360.1 357.6 L358.9 359.4 L358.2 361.4 L356.6 362.7 L354.5 363.3 L352.6 365.2 L351.3 368.3 L352 370.8 L350.5 373.1 L348.8 375.2 L347.6 379 L345.9 380.8 L343.8 382.1 L341.3 385.2 L341.3 387.8 L343.8 386.5 L346.3 385.2 L350.1 384 L352.6 386.5 L354.9 385.8 L357 384.6 L360.1 386.5 L363.9 387.1 L366 388 L367.7 389.6 L371.4 390.9 L374 391.5 L376.4 392.8 L380.2 393.4 L381.5 395.3 L380.1 397.1 L379 399.1 L377.1 400 L375.2 400.9 L373.2 403 L370.8 404.7 L373.9 405.3 L375.7 403.6 L377.7 402.2 L380.1 400.5 L382.7 399.1 L385.1 397.8 L387.7 397.2 L389.7 396.8 L391.5 395.9 L394 396.2 L396.5 396.5 L400.3 395.3 L404.1 394.7 L405.3 392.8 L405.3 390.3 L402.8 387.8 L403.4 385.2 L399.7 384 L400.3 380.2 L399.1 377.8 L398.4 375.2 L397.3 373.4 L396.5 371.4 L395.3 367.7 L393.8 366 L392.8 363.9 L390.9 363 L389 362 L387.7 359.5 L385.9 357 L387.1 353.9 L387.8 351.9 L389 350.1 L389.1 347.9 L389.6 345.9 L390.2 343.8 L389.4 341.9 L388.4 340.1 L385.9 337.6 L384 336.3Z" fill="none" stroke="#1f8ff0" stroke-width="3.5" stroke-linejoin="round"/>
<text x="53.3" y="679" font-size="10.2" fill="#333" font-family="Liberation Sans, sans-serif">Kido Dynamics © 2020</text>
</svg>
</div>
<div id="panel">
<div id="hdr"><div class="ttl">Community Of Madrid</div><div class="lang"><b>English</b><span>Spanish</span></div></div>
<div id="logo"><span class="k"><i style="left:21.5px;transform:scaleX(1.1)">K</i><i style="left:51.5px;top:1.5px;transform:scale(1.25,.53)">I</i><i style="left:67.5px;transform:scaleX(.88)">D</i><i style="left:96.5px;transform:scaleX(.93)">O</i></span><span class="d">DYNAMICS</span></div>
<div class="box" id="sel"><span class="t">Community of Madrid</span><span class="a">&#9660;</span></div>
<div class="box" id="date"><span class="t">1/1/2020 ~ 7/31/2020</span></div>
<div id="btns"><div class="on">Daily</div><div class="w">Weekly</div><div class="m">Monthly</div></div>
<div id="rpd">Roamers per day</div>
<svg id="chartsvg" width="738" height="674" viewBox="717 17 738 674" font-family="Liberation Sans, sans-serif">
<g id="bars">
<path d="M791.41 596.3V477.3h2.5V596.3zM794.34 596.3V485.7h2.5V596.3zM797.27 596.3V495.7h2.5V596.3zM800.20 596.3V506.5h2.5V596.3zM803.13 596.3V508.2h2.5V596.3zM806.05 596.3V507.1h2.5V596.3zM808.98 596.3V506.5h2.5V596.3zM811.91 596.3V507.3h2.5V596.3zM814.84 596.3V505.6h2.5V596.3zM817.77 596.3V507.3h2.5V596.3zM820.69 596.3V508.2h2.5V596.3zM826.55 596.3V504.0h2.5V596.3zM829.48 596.3V506.5h2.5V596.3zM832.41 596.3V505.7h2.5V596.3zM838.26 596.3V503.2h2.5V596.3zM841.19 596.3V504.9h2.5V596.3zM844.12 596.3V495.7h2.5V596.3zM847.05 596.3V500.7h2.5V596.3zM849.97 596.3V500.7h2.5V596.3zM852.90 596.3V498.2h2.5V596.3zM855.83 596.3V496.5h2.5V596.3zM858.76 596.3V496.0h2.5V596.3zM861.69 596.3V504.0h2.5V596.3zM864.61 596.3V491.5h2.5V596.3zM867.54 596.3V499.0h2.5V596.3zM870.47 596.3V500.7h2.5V596.3zM873.40 596.3V500.7h2.5V596.3zM879.25 596.3V499.9h2.5V596.3zM882.18 596.3V500.7h2.5V596.3zM885.11 596.3V502.3h2.5V596.3zM888.04 596.3V490.6h2.5V596.3zM890.97 596.3V497.5h2.5V596.3zM893.89 596.3V500.0h2.5V596.3zM896.82 596.3V496.5h2.5V596.3zM899.75 596.3V496.5h2.5V596.3zM902.68 596.3V498.8h2.5V596.3zM905.61 596.3V490.4h2.5V596.3zM911.46 596.3V503.5h2.5V596.3zM914.39 596.3V502.5h2.5V596.3zM917.32 596.3V500.0h2.5V596.3zM920.25 596.3V500.0h2.5V596.3zM931.96 596.3V496.0h2.5V596.3zM934.89 596.3V493.0h2.5V596.3zM937.81 596.3V489.8h2.5V596.3zM940.74 596.3V493.4h2.5V596.3zM943.67 596.3V498.5h2.5V596.3zM946.60 596.3V496.0h2.5V596.3zM949.53 596.3V499.4h2.5V596.3zM952.45 596.3V501.4h2.5V596.3zM955.38 596.3V501.0h2.5V596.3zM958.31 596.3V496.5h2.5V596.3zM961.24 596.3V492.4h2.5V596.3zM967.09 596.3V485.9h2.5V596.3zM970.02 596.3V493.4h2.5V596.3zM972.95 596.3V503.5h2.5V596.3zM975.88 596.3V506.5h2.5V596.3zM978.81 596.3V503.5h2.5V596.3zM981.73 596.3V505.5h2.5V596.3zM990.52 596.3V510.8h2.5V596.3zM993.45 596.3V516.4h2.5V596.3zM996.37 596.3V520.7h2.5V596.3zM999.30 596.3V524.9h2.5V596.3zM1002.23 596.3V528.4h2.5V596.3zM1005.16 596.3V532.6h2.5V596.3zM1008.09 596.3V529.8h2.5V596.3zM1011.01 596.3V531.2h2.5V596.3zM1013.94 596.3V534.0h2.5V596.3zM1016.87 596.3V535.5h2.5V596.3zM1019.80 596.3V538.3h2.5V596.3zM1022.73 596.3V546.7h2.5V596.3zM1025.65 596.3V548.5h2.5V596.3zM1028.58 596.3V540.6h2.5V596.3zM1031.51 596.3V540.4h2.5V596.3zM1034.44 596.3V541.5h2.5V596.3zM1037.37 596.3V542.4h2.5V596.3zM1040.29 596.3V543.2h2.5V596.3zM1043.22 596.3V550.9h2.5V596.3zM1046.15 596.3V551.9h2.5V596.3zM1049.08 596.3V546.1h2.5V596.3zM1052.01 596.3V546.3h2.5V596.3zM1054.93 596.3V547.4h2.5V596.3zM1057.86 596.3V547.7h2.5V596.3zM1060.79 596.3V548.1h2.5V596.3zM1063.72 596.3V554.5h2.5V596.3zM1066.65 596.3V555.9h2.5V596.3zM1069.57 596.3V549.5h2.5V596.3zM1072.50 596.3V547.7h2.5V596.3zM1075.43 596.3V547.4h2.5V596.3zM1078.36 596.3V555.2h2.5V596.3zM1081.29 596.3V555.6h2.5V596.3zM1084.21 596.3V555.9h2.5V596.3zM1087.14 596.3V556.2h2.5V596.3zM1090.07 596.3V545.3h2.5V596.3zM1093.00 596.3V546.7h2.5V596.3zM1095.93 596.3V545.3h2.5V596.3zM1098.85 596.3V544.9h2.5V596.3zM1101.78 596.3V546.1h2.5V596.3zM1104.71 596.3V554.5h2.5V596.3zM1107.64 596.3V554.7h2.5V596.3zM1110.57 596.3V545.3h2.5V596.3zM1113.49 596.3V544.6h2.5V596.3zM1116.42 596.3V543.9h2.5V596.3zM1119.35 596.3V543.9h2.5V596.3zM1122.28 596.3V548.1h2.5V596.3zM1125.21 596.3V554.5h2.5V596.3zM1128.13 596.3V555.9h2.5V596.3zM1131.06 596.3V546.1h2.5V596.3zM1133.99 596.3V544.6h2.5V596.3zM1136.92 596.3V544.4h2.5V596.3zM1139.85 596.3V544.6h2.5V596.3zM1142.77 596.3V555.2h2.5V596.3zM1145.70 596.3V555.6h2.5V596.3zM1148.63 596.3V555.9h2.5V596.3zM1151.56 596.3V546.1h2.5V596.3zM1157.41 596.3V574.9h2.5V596.3zM1160.34 596.3V549.5h2.5V596.3zM1163.27 596.3V547.2h2.5V596.3zM1166.20 596.3V552.4h2.5V596.3zM1169.13 596.3V555.2h2.5V596.3zM1172.05 596.3V546.1h2.5V596.3zM1174.98 596.3V543.5h2.5V596.3z" fill="#5588c2"/>
<path d="M791.41 477.3V435.1h2.5V477.3zM794.34 485.7V420.3h2.5V485.7zM797.27 495.7V431.7h2.5V495.7zM800.20 506.5V448.8h2.5V506.5zM803.13 508.2V462.2h2.5V508.2zM806.05 507.1V466.4h2.5V507.1zM808.98 506.5V459.2h2.5V506.5zM811.91 507.3V478.9h2.5V507.3zM814.84 505.6V482.3h2.5V505.6zM817.77 507.3V482.6h2.5V507.3zM820.69 508.2V488.1h2.5V508.2zM823.62 596.3V480.6h2.5V596.3zM826.55 504.0V499.0h2.5V504.0zM829.48 506.5V502.3h2.5V506.5zM832.41 505.7V499.9h2.5V505.7zM838.26 503.2V490.6h2.5V503.2zM841.19 504.9V491.0h2.5V504.9zM844.12 495.7V480.6h2.5V495.7zM847.05 500.7V483.6h2.5V500.7zM849.97 500.7V486.5h2.5V500.7zM852.90 498.2V485.7h2.5V498.2zM855.83 496.5V487.4h2.5V496.5zM858.76 496.0V488.6h2.5V496.0zM861.69 504.0V492.3h2.5V504.0zM864.61 491.5V486.5h2.5V491.5zM867.54 499.0V490.6h2.5V499.0zM870.47 500.7V492.3h2.5V500.7zM873.40 500.7V494.8h2.5V500.7zM876.33 596.3V493.2h2.5V596.3zM879.25 499.9V487.4h2.5V499.9zM882.18 500.7V483.1h2.5V500.7zM885.11 502.3V484.8h2.5V502.3zM888.04 490.6V476.9h2.5V490.6zM890.97 497.5V479.4h2.5V497.5zM893.89 500.0V475.4h2.5V500.0zM896.82 496.5V471.9h2.5V496.5zM899.75 496.5V467.3h2.5V496.5zM911.46 503.5V496.9h2.5V503.5zM914.39 502.5V500.0h2.5V502.5zM917.32 500.0V492.4h2.5V500.0zM920.25 500.0V492.2h2.5V500.0zM931.96 496.0V484.4h2.5V496.0zM934.89 493.0V484.7h2.5V493.0zM937.81 489.8V489.5h2.5V489.8zM940.74 493.4V491.0h2.5V493.4zM943.67 498.5V493.0h2.5V498.5zM946.60 496.0V483.0h2.5V496.0zM949.53 499.4V486.5h2.5V499.4zM952.45 501.4V486.5h2.5V501.4zM955.38 501.0V485.9h2.5V501.0zM958.31 496.5V484.4h2.5V496.5zM961.24 492.4V487.9h2.5V492.4zM964.17 596.3V484.9h2.5V596.3zM984.66 596.3V501.7h2.5V596.3zM987.59 596.3V507.3h2.5V596.3z" fill="#c49bed"/>
<path d="M835.33 596.3V503.2h2.5V596.3zM902.68 498.8V498.3h2.5V498.8zM905.61 490.4V489.9h2.5V490.4zM908.53 596.3V502.5h2.5V596.3zM923.17 596.3V502.0h2.5V596.3zM926.10 596.3V491.0h2.5V596.3zM929.03 596.3V496.5h2.5V596.3zM970.02 493.4V490.5h2.5V493.4zM972.95 503.5V492.4h2.5V503.5zM975.88 506.5V495.5h2.5V506.5zM978.81 503.5V497.9h2.5V503.5zM981.73 505.5V497.5h2.5V505.5zM990.52 510.8V495.5h2.5V510.8zM993.45 516.4V499.0h2.5V516.4zM996.37 520.7V499.0h2.5V520.7zM999.30 524.9V494.0h2.5V524.9zM1002.23 528.4V494.0h2.5V528.4zM1005.16 532.6V496.9h2.5V532.6zM1008.09 529.8V489.5h2.5V529.8zM1011.01 531.2V492.4h2.5V531.2zM1013.94 534.0V493.4h2.5V534.0zM1016.87 535.5V493.2h2.5V535.5zM1019.80 538.3V492.4h2.5V538.3zM1022.73 546.7V487.5h2.5V546.7zM1025.65 548.5V494.0h2.5V548.5zM1028.58 540.6V482.7h2.5V540.6zM1031.51 540.4V490.4h2.5V540.4zM1034.44 541.5V494.9h2.5V541.5zM1037.37 542.4V495.9h2.5V542.4zM1040.29 543.2V493.0h2.5V543.2zM1043.22 550.9V490.4h2.5V550.9zM1046.15 551.9V491.4h2.5V551.9zM1049.08 546.1V478.9h2.5V546.1zM1052.01 546.3V490.4h2.5V546.3zM1054.93 547.4V496.5h2.5V547.4zM1057.86 547.7V495.5h2.5V547.7zM1060.79 548.1V489.9h2.5V548.1zM1063.72 554.5V485.9h2.5V554.5zM1066.65 555.9V486.5h2.5V555.9zM1069.57 549.5V476.4h2.5V549.5zM1072.50 547.7V484.4h2.5V547.7zM1075.43 547.4V492.4h2.5V547.4zM1078.36 555.2V495.9h2.5V555.2zM1081.29 555.6V493.0h2.5V555.6zM1084.21 555.9V492.0h2.5V555.9zM1087.14 556.2V490.4h2.5V556.2zM1090.07 545.3V483.0h2.5V545.3zM1093.00 546.7V488.9h2.5V546.7zM1095.93 545.3V497.5h2.5V545.3zM1098.85 544.9V494.0h2.5V544.9zM1101.78 546.1V496.5h2.5V546.1zM1104.71 554.5V492.2h2.5V554.5zM1107.64 554.7V492.4h2.5V554.7zM1110.57 545.3V482.0h2.5V545.3zM1113.49 544.6V477.9h2.5V544.6zM1116.42 543.9V488.5h2.5V543.9zM1119.35 543.9V486.9h2.5V543.9zM1122.28 548.1V477.4h2.5V548.1zM1125.21 554.5V477.9h2.5V554.5zM1128.13 555.9V478.9h2.5V555.9zM1131.06 546.1V472.8h2.5V546.1zM1133.99 544.6V479.4h2.5V544.6zM1136.92 544.4V487.5h2.5V544.4zM1139.85 544.6V480.4h2.5V544.6zM1142.77 555.2V495.9h2.5V555.2zM1145.70 555.6V491.0h2.5V555.6zM1148.63 555.9V488.5h2.5V555.9zM1151.56 546.1V480.9h2.5V546.1zM1154.49 596.3V483.4h2.5V596.3zM1157.41 574.9V484.9h2.5V574.9zM1160.34 549.5V483.0h2.5V549.5zM1163.27 547.2V482.0h2.5V547.2zM1166.20 552.4V480.9h2.5V552.4zM1169.13 555.2V481.4h2.5V555.2zM1172.05 546.1V475.4h2.5V546.1zM1174.98 543.5V482.0h2.5V543.5zM1177.91 596.3V483.0h2.5V596.3zM1180.84 596.3V482.5h2.5V596.3zM1183.77 596.3V484.8h2.5V596.3zM1186.69 596.3V472.4h2.5V596.3zM1195.48 596.3V462.5h2.5V596.3zM1198.41 596.3V469.9h2.5V596.3zM1201.33 596.3V472.4h2.5V596.3zM1204.26 596.3V464.0h2.5V596.3zM1207.19 596.3V458.2h2.5V596.3zM1210.12 596.3V458.2h2.5V596.3zM1213.05 596.3V453.2h2.5V596.3zM1215.97 596.3V459.1h2.5V596.3zM1218.90 596.3V464.9h2.5V596.3zM1221.83 596.3V454.0h2.5V596.3zM1224.76 596.3V444.8h2.5V596.3zM1227.69 596.3V417.2h2.5V596.3zM1230.61 596.3V367.8h2.5V596.3zM1233.54 596.3V364.6h2.5V596.3zM1236.47 596.3V441.5h2.5V596.3zM1239.40 596.3V461.6h2.5V596.3zM1242.33 596.3V463.2h2.5V596.3zM1245.25 596.3V456.6h2.5V596.3zM1248.18 596.3V456.6h2.5V596.3zM1251.11 596.3V455.7h2.5V596.3zM1254.04 596.3V444.0h2.5V596.3zM1256.97 596.3V451.3h2.5V596.3zM1259.89 596.3V461.2h2.5V596.3zM1262.82 596.3V465.7h2.5V596.3zM1265.75 596.3V462.9h2.5V596.3zM1271.61 596.3V471.1h2.5V596.3zM1274.53 596.3V465.7h2.5V596.3zM1277.46 596.3V469.6h2.5V596.3zM1280.39 596.3V471.1h2.5V596.3zM1283.32 596.3V474.2h2.5V596.3zM1286.25 596.3V476.0h2.5V596.3zM1292.10 596.3V480.0h2.5V596.3zM1295.03 596.3V474.0h2.5V596.3zM1297.96 596.3V468.7h2.5V596.3zM1300.89 596.3V478.9h2.5V596.3zM1303.81 596.3V475.6h2.5V596.3zM1306.74 596.3V470.1h2.5V596.3zM1309.67 596.3V472.8h2.5V596.3zM1312.60 596.3V478.3h2.5V596.3zM1315.53 596.3V470.1h2.5V596.3zM1318.45 596.3V478.3h2.5V596.3zM1321.38 596.3V480.7h2.5V596.3zM1324.31 596.3V481.4h2.5V596.3zM1333.09 596.3V479.5h2.5V596.3zM1336.02 596.3V471.7h2.5V596.3zM1341.88 596.3V478.3h2.5V596.3zM1344.81 596.3V482.2h2.5V596.3zM1347.73 596.3V479.5h2.5V596.3zM1350.66 596.3V480.6h2.5V596.3zM1353.59 596.3V485.6h2.5V596.3zM1356.52 596.3V477.2h2.5V596.3zM1359.45 596.3V476.1h2.5V596.3zM1362.37 596.3V483.3h2.5V596.3zM1365.30 596.3V481.6h2.5V596.3zM1368.23 596.3V479.2h2.5V596.3zM1371.16 596.3V479.5h2.5V596.3zM1374.09 596.3V485.0h2.5V596.3zM1377.01 596.3V480.6h2.5V596.3zM1379.94 596.3V480.3h2.5V596.3zM1382.87 596.3V479.7h2.5V596.3zM1385.80 596.3V472.8h2.5V596.3zM1388.73 596.3V472.6h2.5V596.3zM1391.65 596.3V478.9h2.5V596.3zM1394.58 596.3V487.1h2.5V596.3zM1397.51 596.3V485.6h2.5V596.3zM1400.44 596.3V483.3h2.5V596.3zM1403.37 596.3V482.2h2.5V596.3zM1406.29 596.3V480.6h2.5V596.3zM1409.22 596.3V478.3h2.5V596.3zM1412.15 596.3V480.3h2.5V596.3z" fill="#84ebd0"/>
<path d="M835.33 503.2h2.50v1.1h-2.50zM902.68 498.3h2.50v1.1h-2.50zM905.61 489.9h2.50v1.1h-2.50zM908.53 502.5h2.50v1.1h-2.50zM923.17 502.0h2.50v1.1h-2.50zM926.10 491.0h2.50v1.1h-2.50zM929.03 496.5h2.50v1.1h-2.50zM970.02 490.5h2.50v1.1h-2.50zM972.95 492.4h2.50v1.1h-2.50zM975.88 495.5h2.50v1.1h-2.50zM978.81 497.9h2.50v1.1h-2.50zM981.73 497.5h2.50v1.1h-2.50zM990.52 495.5h2.50v1.1h-2.50zM993.45 499.0h2.50v1.1h-2.50zM996.37 499.0h2.50v1.1h-2.50zM999.30 494.0h2.50v1.1h-2.50zM1002.23 494.0h2.50v1.1h-2.50zM1005.16 496.9h2.50v1.1h-2.50zM1008.09 489.5h2.50v1.1h-2.50zM1011.01 492.4h2.50v1.1h-2.50zM1013.94 493.4h2.50v1.1h-2.50zM1016.87 493.2h2.50v1.1h-2.50zM1019.80 492.4h2.50v1.1h-2.50zM1022.73 487.5h2.50v1.1h-2.50zM1025.65 494.0h2.50v1.1h-2.50zM1028.58 482.7h2.50v1.1h-2.50zM1031.51 490.4h2.50v1.1h-2.50zM1034.44 494.9h2.50v1.1h-2.50zM1037.37 495.9h2.50v1.1h-2.50zM1040.29 493.0h2.50v1.1h-2.50zM1043.22 490.4h2.50v1.1h-2.50zM1046.15 491.4h2.50v1.1h-2.50zM1049.08 478.9h2.50v1.1h-2.50zM1052.01 490.4h2.50v1.1h-2.50zM1054.93 496.5h2.50v1.1h-2.50zM1057.86 495.5h2.50v1.1h-2.50zM1060.79 489.9h2.50v1.1h-2.50zM1063.72 485.9h2.50v1.1h-2.50zM1066.65 486.5h2.50v1.1h-2.50zM1069.57 476.4h2.50v1.1h-2.50zM1072.50 484.4h2.50v1.1h-2.50zM1075.43 492.4h2.50v1.1h-2.50zM1078.36 495.9h2.50v1.1h-2.50zM1081.29 493.0h2.50v1.1h-2.50zM1084.21 492.0h2.50v1.1h-2.50zM1087.14 490.4h2.50v1.1h-2.50zM1090.07 483.0h2.50v1.1h-2.50zM1093.00 488.9h2.50v1.1h-2.50zM1095.93 497.5h2.50v1.1h-2.50zM1098.85 494.0h2.50v1.1h-2.50zM1101.78 496.5h2.50v1.1h-2.50zM1104.71 492.2h2.50v1.1h-2.50zM1107.64 492.4h2.50v1.1h-2.50zM1110.57 482.0h2.50v1.1h-2.50zM1113.49 477.9h2.50v1.1h-2.50zM1116.42 488.5h2.50v1.1h-2.50zM1119.35 486.9h2.50v1.1h-2.50zM1122.28 477.4h2.50v1.1h-2.50zM1125.21 477.9h2.50v1.1h-2.50zM1128.13 478.9h2.50v1.1h-2.50zM1131.06 472.8h2.50v1.1h-2.50zM1133.99 479.4h2.50v1.1h-2.50zM1136.92 487.5h2.50v1.1h-2.50zM1139.85 480.4h2.50v1.1h-2.50zM1142.77 495.9h2.50v1.1h-2.50zM1145.70 491.0h2.50v1.1h-2.50zM1148.63 488.5h2.50v1.1h-2.50zM1151.56 480.9h2.50v1.1h-2.50zM1154.49 483.4h2.50v1.1h-2.50zM1157.41 484.9h2.50v1.1h-2.50zM1160.34 483.0h2.50v1.1h-2.50zM1163.27 482.0h2.50v1.1h-2.50zM1166.20 480.9h2.50v1.1h-2.50zM1169.13 481.4h2.50v1.1h-2.50zM1172.05 475.4h2.50v1.1h-2.50zM1174.98 482.0h2.50v1.1h-2.50zM1177.91 483.0h2.50v1.1h-2.50zM1180.84 482.5h2.50v1.1h-2.50zM1183.77 484.8h2.50v1.1h-2.50zM1186.69 472.4h2.50v1.1h-2.50zM1195.48 462.5h2.50v1.1h-2.50zM1198.41 469.9h2.50v1.1h-2.50zM1201.33 472.4h2.50v1.1h-2.50zM1204.26 464.0h2.50v1.1h-2.50zM1207.19 458.2h2.50v1.1h-2.50zM1210.12 458.2h2.50v1.1h-2.50zM1213.05 453.2h2.50v1.1h-2.50zM1215.97 459.1h2.50v1.1h-2.50zM1218.90 464.9h2.50v1.1h-2.50zM1221.83 454.0h2.50v1.1h-2.50zM1224.76 444.8h2.50v1.1h-2.50zM1227.69 417.2h2.50v1.1h-2.50zM1230.61 367.8h2.50v1.1h-2.50zM1233.54 364.6h2.50v1.1h-2.50zM1236.47 441.5h2.50v1.1h-2.50zM1239.40 461.6h2.50v1.1h-2.50zM1242.33 463.2h2.50v1.1h-2.50zM1245.25 456.6h2.50v1.1h-2.50zM1248.18 456.6h2.50v1.1h-2.50zM1251.11 455.7h2.50v1.1h-2.50zM1254.04 444.0h2.50v1.1h-2.50zM1256.97 451.3h2.50v1.1h-2.50zM1259.89 461.2h2.50v1.1h-2.50zM1262.82 465.7h2.50v1.1h-2.50zM1265.75 462.9h2.50v1.1h-2.50zM1271.61 471.1h2.50v1.1h-2.50zM1274.53 465.7h2.50v1.1h-2.50zM1277.46 469.6h2.50v1.1h-2.50zM1280.39 471.1h2.50v1.1h-2.50zM1283.32 474.2h2.50v1.1h-2.50zM1286.25 476.0h2.50v1.1h-2.50zM1292.10 480.0h2.50v1.1h-2.50zM1295.03 474.0h2.50v1.1h-2.50zM1297.96 468.7h2.50v1.1h-2.50zM1300.89 478.9h2.50v1.1h-2.50zM1303.81 475.6h2.50v1.1h-2.50zM1306.74 470.1h2.50v1.1h-2.50zM1309.67 472.8h2.50v1.1h-2.50zM1312.60 478.3h2.50v1.1h-2.50zM1315.53 470.1h2.50v1.1h-2.50zM1318.45 478.3h2.50v1.1h-2.50zM1321.38 480.7h2.50v1.1h-2.50zM1324.31 481.4h2.50v1.1h-2.50zM1333.09 479.5h2.50v1.1h-2.50zM1336.02 471.7h2.50v1.1h-2.50zM1341.88 478.3h2.50v1.1h-2.50zM1344.81 482.2h2.50v1.1h-2.50zM1347.73 479.5h2.50v1.1h-2.50zM1350.66 480.6h2.50v1.1h-2.50zM1353.59 485.6h2.50v1.1h-2.50zM1356.52 477.2h2.50v1.1h-2.50zM1359.45 476.1h2.50v1.1h-2.50zM1362.37 483.3h2.50v1.1h-2.50zM1365.30 481.6h2.50v1.1h-2.50zM1368.23 479.2h2.50v1.1h-2.50zM1371.16 479.5h2.50v1.1h-2.50zM1374.09 485.0h2.50v1.1h-2.50zM1377.01 480.6h2.50v1.1h-2.50zM1379.94 480.3h2.50v1.1h-2.50zM1382.87 479.7h2.50v1.1h-2.50zM1385.80 472.8h2.50v1.1h-2.50zM1388.73 472.6h2.50v1.1h-2.50zM1391.65 478.9h2.50v1.1h-2.50zM1394.58 487.1h2.50v1.1h-2.50zM1397.51 485.6h2.50v1.1h-2.50zM1400.44 483.3h2.50v1.1h-2.50zM1403.37 482.2h2.50v1.1h-2.50zM1406.29 480.6h2.50v1.1h-2.50zM1409.22 478.3h2.50v1.1h-2.50zM1412.15 480.3h2.50v1.1h-2.50z" fill="#5fcfae" fill-opacity="0.75"/>
<path d="M791.41 435.1h2.50v1.1h-2.50zM794.34 420.3h2.50v1.1h-2.50zM797.27 431.7h2.50v1.1h-2.50zM800.20 448.8h2.50v1.1h-2.50zM803.13 462.2h2.50v1.1h-2.50zM806.05 466.4h2.50v1.1h-2.50zM808.98 459.2h2.50v1.1h-2.50zM811.91 478.9h2.50v1.1h-2.50zM814.84 482.3h2.50v1.1h-2.50zM817.77 482.6h2.50v1.1h-2.50zM820.69 488.1h2.50v1.1h-2.50zM823.62 480.6h2.50v1.1h-2.50zM826.55 499.0h2.50v1.1h-2.50zM829.48 502.3h2.50v1.1h-2.50zM832.41 499.9h2.50v1.1h-2.50zM838.26 490.6h2.50v1.1h-2.50zM841.19 491.0h2.50v1.1h-2.50zM844.12 480.6h2.50v1.1h-2.50zM847.05 483.6h2.50v1.1h-2.50zM849.97 486.5h2.50v1.1h-2.50zM852.90 485.7h2.50v1.1h-2.50zM855.83 487.4h2.50v1.1h-2.50zM858.76 488.6h2.50v1.1h-2.50zM861.69 492.3h2.50v1.1h-2.50zM864.61 486.5h2.50v1.1h-2.50zM867.54 490.6h2.50v1.1h-2.50zM870.47 492.3h2.50v1.1h-2.50zM873.40 494.8h2.50v1.1h-2.50zM876.33 493.2h2.50v1.1h-2.50zM879.25 487.4h2.50v1.1h-2.50zM882.18 483.1h2.50v1.1h-2.50zM885.11 484.8h2.50v1.1h-2.50zM888.04 476.9h2.50v1.1h-2.50zM890.97 479.4h2.50v1.1h-2.50zM893.89 475.4h2.50v1.1h-2.50zM896.82 471.9h2.50v1.1h-2.50zM899.75 467.3h2.50v1.1h-2.50zM911.46 496.9h2.50v1.1h-2.50zM914.39 500.0h2.50v1.1h-2.50zM917.32 492.4h2.50v1.1h-2.50zM920.25 492.2h2.50v1.1h-2.50zM931.96 484.4h2.50v1.1h-2.50zM934.89 484.7h2.50v1.1h-2.50zM937.81 489.5h2.50v1.1h-2.50zM940.74 491.0h2.50v1.1h-2.50zM943.67 493.0h2.50v1.1h-2.50zM946.60 483.0h2.50v1.1h-2.50zM949.53 486.5h2.50v1.1h-2.50zM952.45 486.5h2.50v1.1h-2.50zM955.38 485.9h2.50v1.1h-2.50zM958.31 484.4h2.50v1.1h-2.50zM961.24 487.9h2.50v1.1h-2.50zM964.17 484.9h2.50v1.1h-2.50zM967.09 485.9h2.50v1.1h-2.50zM984.66 501.7h2.50v1.1h-2.50zM987.59 507.3h2.50v1.1h-2.50z" fill="#9b6fd0" fill-opacity="0.7"/>
</g>
<text x="783" y="594.8" text-anchor="end" font-size="11.2" fill="#666" dominant-baseline="central">0</text>
<text x="783" y="538.4" text-anchor="end" font-size="11.2" fill="#666" dominant-baseline="central">50000</text>
<text x="783" y="482.0" text-anchor="end" font-size="11.2" fill="#666" dominant-baseline="central">100000</text>
<text x="783" y="425.7" text-anchor="end" font-size="11.2" fill="#666" dominant-baseline="central">150000</text>
<text x="783" y="369.3" text-anchor="end" font-size="11.2" fill="#666" dominant-baseline="central">200000</text>
<text x="783" y="312.9" text-anchor="end" font-size="11.2" fill="#666" dominant-baseline="central">250000</text>
<text transform="translate(791.1 603.5) rotate(-47.5)" text-anchor="end" font-size="11.2" fill="#6e6e6e" dominant-baseline="hanging">2020-01-01</text>
<text transform="translate(808.6 603.5) rotate(-47.5)" text-anchor="end" font-size="11.2" fill="#6e6e6e" dominant-baseline="hanging">2020-01-07</text>
<text transform="translate(826.0 603.5) rotate(-47.5)" text-anchor="end" font-size="11.2" fill="#6e6e6e" dominant-baseline="hanging">2020-01-13</text>
<text transform="translate(843.5 603.5) rotate(-47.5)" text-anchor="end" font-size="11.2" fill="#6e6e6e" dominant-baseline="hanging">2020-01-19</text>
<text transform="translate(860.9 603.5) rotate(-47.5)" text-anchor="end" font-size="11.2" fill="#6e6e6e" dominant-baseline="hanging">2020-01-25</text>
<text transform="translate(878.4 603.5) rotate(-47.5)" text-anchor="end" font-size="11.2" fill="#6e6e6e" dominant-baseline="hanging">2020-01-31</text>
<text transform="translate(895.8 603.5) rotate(-47.5)" text-anchor="end" font-size="11.2" fill="#6e6e6e" dominant-baseline="hanging">2020-02-06</text>
<text transform="translate(913.3 603.5) rotate(-47.5)" text-anchor="end" font-size="11.2" fill="#6e6e6e" dominant-baseline="hanging">2020-02-12</text>
<text transform="translate(930.7 603.5) rotate(-47.5)" text-anchor="end" font-size="11.2" fill="#6e6e6e" dominant-baseline="hanging">2020-02-18</text>
<text transform="translate(948.2 603.5) rotate(-47.5)" text-anchor="end" font-size="11.2" fill="#6e6e6e" dominant-baseline="hanging">2020-02-24</text>
<text transform="translate(965.6 603.5) rotate(-47.5)" text-anchor="end" font-size="11.2" fill="#6e6e6e" dominant-baseline="hanging">2020-03-01</text>
<text transform="translate(983.1 603.5) rotate(-47.5)" text-anchor="end" font-size="11.2" fill="#6e6e6e" dominant-baseline="hanging">2020-03-07</text>
<text transform="translate(1000.5 603.5) rotate(-47.5)" text-anchor="end" font-size="11.2" fill="#6e6e6e" dominant-baseline="hanging">2020-03-13</text>
<text transform="translate(1018.0 603.5) rotate(-47.5)" text-anchor="end" font-size="11.2" fill="#6e6e6e" dominant-baseline="hanging">2020-03-19</text>
<text transform="translate(1035.4 603.5) rotate(-47.5)" text-anchor="end" font-size="11.2" fill="#6e6e6e" dominant-baseline="hanging">2020-03-25</text>
<text transform="translate(1052.9 603.5) rotate(-47.5)" text-anchor="end" font-size="11.2" fill="#6e6e6e" dominant-baseline="hanging">2020-03-31</text>
<text transform="translate(1070.3 603.5) rotate(-47.5)" text-anchor="end" font-size="11.2" fill="#6e6e6e" dominant-baseline="hanging">2020-04-06</text>
<text transform="translate(1087.8 603.5) rotate(-47.5)" text-anchor="end" font-size="11.2" fill="#6e6e6e" dominant-baseline="hanging">2020-04-12</text>
<text transform="translate(1105.2 603.5) rotate(-47.5)" text-anchor="end" font-size="11.2" fill="#6e6e6e" dominant-baseline="hanging">2020-04-18</text>
<text transform="translate(1122.7 603.5) rotate(-47.5)" text-anchor="end" font-size="11.2" fill="#6e6e6e" dominant-baseline="hanging">2020-04-24</text>
<text transform="translate(1140.1 603.5) rotate(-47.5)" text-anchor="end" font-size="11.2" fill="#6e6e6e" dominant-baseline="hanging">2020-04-30</text>
<text transform="translate(1157.6 603.5) rotate(-47.5)" text-anchor="end" font-size="11.2" fill="#6e6e6e" dominant-baseline="hanging">2020-05-06</text>
<text transform="translate(1175.0 603.5) rotate(-47.5)" text-anchor="end" font-size="11.2" fill="#6e6e6e" dominant-baseline="hanging">2020-05-12</text>
<text transform="translate(1192.5 603.5) rotate(-47.5)" text-anchor="end" font-size="11.2" fill="#6e6e6e" dominant-baseline="hanging">2020-05-18</text>
<text transform="translate(1209.9 603.5) rotate(-47.5)" text-anchor="end" font-size="11.2" fill="#6e6e6e" dominant-baseline="hanging">2020-05-24</text>
<text transform="translate(1227.4 603.5) rotate(-47.5)" text-anchor="end" font-size="11.2" fill="#6e6e6e" dominant-baseline="hanging">2020-05-30</text>
<text transform="translate(1244.8 603.5) rotate(-47.5)" text-anchor="end" font-size="11.2" fill="#6e6e6e" dominant-baseline="hanging">2020-06-05</text>
<text transform="translate(1262.3 603.5) rotate(-47.5)" text-anchor="end" font-size="11.2" fill="#6e6e6e" dominant-baseline="hanging">2020-06-11</text>
<text transform="translate(1279.7 603.5) rotate(-47.5)" text-anchor="end" font-size="11.2" fill="#6e6e6e" dominant-baseline="hanging">2020-06-17</text>
<text transform="translate(1297.2 603.5) rotate(-47.5)" text-anchor="end" font-size="11.2" fill="#6e6e6e" dominant-baseline="hanging">2020-06-23</text>
<text transform="translate(1314.6 603.5) rotate(-47.5)" text-anchor="end" font-size="11.2" fill="#6e6e6e" dominant-baseline="hanging">2020-06-29</text>
<text transform="translate(1332.1 603.5) rotate(-47.5)" text-anchor="end" font-size="11.2" fill="#6e6e6e" dominant-baseline="hanging">2020-07-05</text>
<text transform="translate(1349.6 603.5) rotate(-47.5)" text-anchor="end" font-size="11.2" fill="#6e6e6e" dominant-baseline="hanging">2020-07-11</text>
<text transform="translate(1367.0 603.5) rotate(-47.5)" text-anchor="end" font-size="11.2" fill="#6e6e6e" dominant-baseline="hanging">2020-07-17</text>
<text transform="translate(1384.5 603.5) rotate(-47.5)" text-anchor="end" font-size="11.2" fill="#6e6e6e" dominant-baseline="hanging">2020-07-23</text>
<text transform="translate(1401.9 603.5) rotate(-47.5)" text-anchor="end" font-size="11.2" fill="#6e6e6e" dominant-baseline="hanging">2020-07-29</text>
<rect x="989.5" y="293.7" width="36.5" height="10.6" fill="#c9a9ee" stroke="#a06ad8" stroke-width="1"/>
<text x="1032.5" y="298.4" font-size="11.1" fill="#666" dominant-baseline="central">total</text>
<rect x="1062" y="293.7" width="36.5" height="10.6" fill="#9aecd6" stroke="#5fdcb8" stroke-width="1"/>
<text x="1104.5" y="298.4" font-size="11.1" fill="#666" dominant-baseline="central">previous year</text>
<text x="1008" y="284.5" text-anchor="middle" font-size="12.5" fill="#9b5fd3" dominant-baseline="central" textLength="28" lengthAdjust="spacingAndGlyphs">2020</text>
<text x="1080" y="284.5" text-anchor="middle" font-size="12.5" fill="#56d9b5" dominant-baseline="central" textLength="28" lengthAdjust="spacingAndGlyphs">2019</text>
<text x="986" y="443.5" font-size="12.6" stroke="#8f48d8" stroke-width="0.35" fill="#8f48d8" dominant-baseline="central" textLength="80" lengthAdjust="spacingAndGlyphs">State of Alarm</text>
<rect x="987.8" y="453" width="2.4" height="39.5" fill="#9c66da"/>
<text x="1218" y="352" font-size="12.6" stroke="#62dcba" stroke-width="0.35" fill="#62dcba" dominant-baseline="central" textLength="197.5" lengthAdjust="spacingAndGlyphs">2019 UEFA Champions League Final</text>
<text x="1402.3" y="661.2" font-size="8.8" stroke="#111" stroke-width="0.35" fill="#111" textLength="13.5" lengthAdjust="spacingAndGlyphs">KI</text>
<text x="1402.3" y="670" font-size="8.8" stroke="#111" stroke-width="0.35" fill="#111" textLength="16" lengthAdjust="spacingAndGlyphs">DO</text>
</svg>
<div id="sb"><div class="up"></div><div class="th"></div></div>
</div>
</body></html>
